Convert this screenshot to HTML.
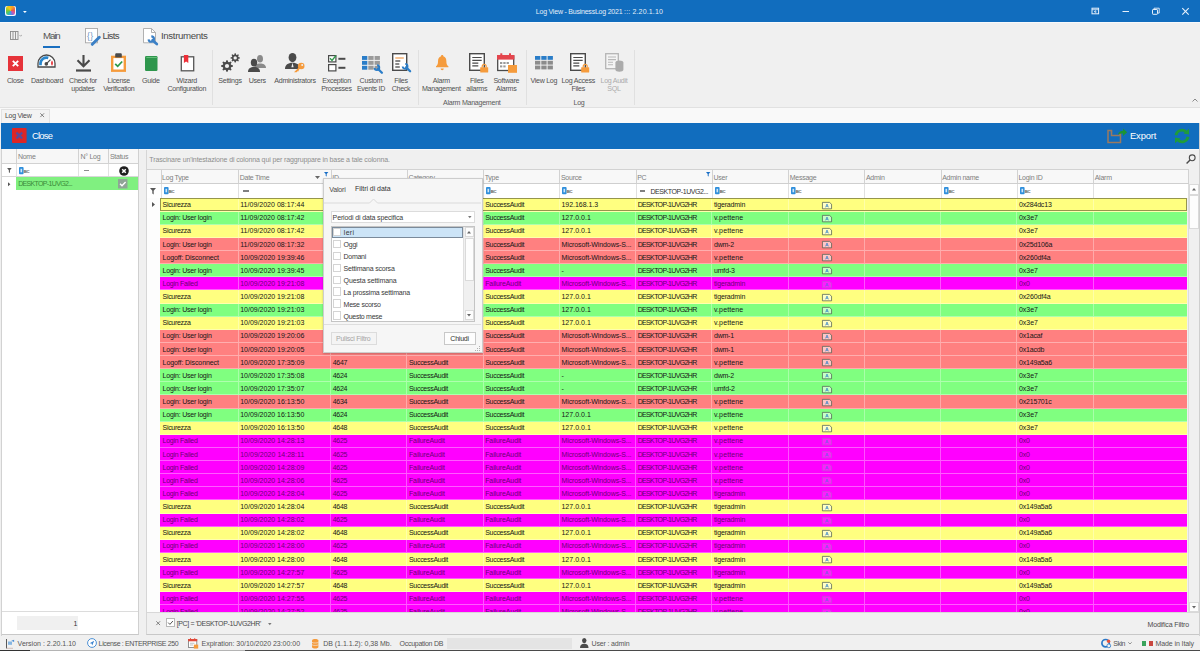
<!DOCTYPE html>
<html><head><meta charset="utf-8"><title>Log View - BusinessLog 2021</title>
<style>
*{box-sizing:border-box}
html,body{margin:0;padding:0}
body{width:1200px;height:651px;overflow:hidden;background:#f0f0f0;font-family:"Liberation Sans",sans-serif;font-size:7px;color:#3c3c3c;position:relative;line-height:1}
.a{position:absolute}
.t{position:absolute;white-space:nowrap;line-height:1}
svg{position:absolute;overflow:visible}
#title{left:0;top:0;width:1200px;height:21.8px;background:#116dbe}
#ribbon{left:0;top:21.8px;width:1200px;height:86.3px;background:#f0f0f0;border-bottom:1px solid #e1e1e1}
.rl{position:absolute;top:55.2px;text-align:center;white-space:nowrap;line-height:8.1px;font-size:7.1px;letter-spacing:-.28px;color:#505050;transform:translateX(-50%)}
.rl.d{color:#ababab}
.sep{position:absolute;top:28px;width:1px;height:55.5px;background:#e0e0e0}
.gc{position:absolute;top:77.9px;font-size:7.1px;letter-spacing:-.28px;color:#5a5a5a;transform:translateX(-50%);white-space:nowrap}
#tabstrip{left:0;top:108px;width:1200px;height:14.5px;background:#f9f9f9}
#bluebar{left:1px;top:122.5px;width:1198px;height:26.3px;background:#116dbe}
#left{left:1px;top:148.8px;width:138px;height:486.7px;background:#fff;border-right:1px solid #d0d0d0;border-bottom:1px solid #c8c8c8;overflow:hidden}
#grid{left:145.5px;top:148.8px;width:1053.5px;height:486.7px;background:#f0f0f0;border-left:1px solid #d6d6d6;border-bottom:1px solid #c8c8c8;overflow:hidden}
.hd{position:absolute;top:0;height:100%;border-left:1px solid #d2d2d2;color:#7e7e7e;font-size:7px;letter-spacing:-.25px;padding:3.600px 0 0 .6px;white-space:nowrap;overflow:hidden}
.row{position:absolute;left:13.600px;width:1027.400px;height:13.125px;overflow:hidden;border-bottom:1px solid rgba(255,255,255,.36);color:#161616}
.c.f{border-left-color:transparent}
.y{background:#ffff80}.g{background:#80ff80}.r{background:#ff8080}.m{background:#ff00ff}
.row.m{color:#6c0076}
.c{position:absolute;top:0;height:100%;border-left:1px solid rgba(255,255,255,.32);padding:2.700px 0 0 1.500px;white-space:nowrap;overflow:hidden;font-size:7px;letter-spacing:-.26px}
#status{left:0;top:636px;width:1200px;height:15px;background:#f0f0f0}
#pop{left:323px;top:177.9px;width:159.600px;height:175.200px;background:#f6f6f6;border:1px solid #cdcdcd;box-shadow:0 1px 2px rgba(0,0,0,.22)}
.li{position:absolute;left:0;width:131px;height:11.875px}
.li i{position:absolute;left:1.4px;top:1.5px;width:8.3px;height:8.3px;background:#fff;border:1px solid #d4d4d4}
.li b{position:absolute;left:12px;top:2.9px;font-weight:normal;font-size:7px;color:#3a3a3a;white-space:nowrap}
</style></head><body>

<div id="title" class="a">
<div class="a" style="left:5.200px;top:5.800px;width:10.800px;height:10.300px;border-radius:2px;background:#f4f8ff;overflow:hidden"><div class="a" style="left:.7px;top:.7px;width:9.400px;height:8.900px;border-radius:2.200px;background:conic-gradient(from -20deg at 52% 52%,#fcc21c,#f59a2a 14%,#ee5a48 28%,#d45aa8 40%,#8a6ad8 48%,#3aa2ea 58%,#3cc28a 68%,#7cc832 80%,#d4cc20 92%,#fcc21c)"></div></div>
<svg style="left:23.2px;top:10.6px" width="3.800" height="2.100" viewBox="0 0 5 3" preserveAspectRatio="none"><path d="M0 0h5L2.5 3z" fill="#fff"/></svg>
<div class="t" style="left:535.80px;top:7.50px;font-size:7px;letter-spacing:-0.219px;color:#e4eef8">Log View - BusinessLog 2021 </div>
<div class="t" style="left:624.10px;top:7.50px;font-size:7px;letter-spacing:0.148px;color:#e4eef8">::: 2.20.1.10</div>
<svg style="left:1090px;top:0" width="110" height="22" viewBox="0 0 110 22"><g fill="none" stroke="#e8f1fb" stroke-width="1"><rect x="2" y="8.2" width="6.6" height="5.6"/><path d="M2 9.7h6.6M5.3 10.8v2.4M4 12l1.3-1.2L6.6 12" stroke-width=".8"/><path d="M32.5 11.5h6.5"/><rect x="62.5" y="9.5" width="5" height="4.8" rx=".6"/><path d="M64 9.3V8.2h5.2v4.9h-1.3" stroke-width=".9"/><path d="M92.3 8.2l6.4 6.4M98.7 8.2l-6.4 6.4" stroke-width="1.1"/></g></svg>
</div>
<div class="a" style="left:0;top:21.800px;width:1200px;height:1.200px;background:#f7f9fc;z-index:3"></div>
<div id="ribbon" class="a">
<svg style="left:9.5px;top:9.5px" width="13" height="9" viewBox="0 0 13 9"><g fill="none" stroke="#8a8a8a" stroke-width=".9"><rect x=".5" y=".5" width="7.5" height="8"/><path d="M3 .5v8M5.5 .5v8"/></g><path d="M9.5 4l1.2 1.2L11.9 4" fill="none" stroke="#8a8a8a" stroke-width=".7"/></svg>
<div class="t" style="left:43.00px;top:9.40px;font-size:9.7px;letter-spacing:-1.106px;color:#555">Main</div>
<div class="a" style="left:43px;top:24.3px;width:17px;height:1.9px;background:#1a6fc0"></div>
<svg style="left:85px;top:6.2px" width="17" height="18" viewBox="0 0 17 18"><rect x=".5" y=".5" width="12" height="14.300" fill="#fff" stroke="#a8a8a8" stroke-width=".9"/><text x="2" y="10.600" font-size="8.500" font-family="Liberation Sans" fill="#6d94bd" letter-spacing=".3">{}</text><path d="M7.300 16.300l7-7" stroke="#3b80c6" stroke-width="3" stroke-linecap="round"/></svg>
<div class="t" style="left:102.50px;top:9.40px;font-size:9.7px;letter-spacing:-0.709px;color:#4a4a4a">Lists</div>
<svg style="left:143px;top:6.200px" width="17" height="19" viewBox="0 0 17 19"><path d="M.5.500h8l4 4v10.300H.5z" fill="#fff" stroke="#a8a8a8" stroke-width=".9"/><path d="M8.500.500v4h4" fill="none" stroke="#a8a8a8" stroke-width=".9"/><path d="M5.600 11.300A2.700 2.700 0 1 0 8.300 8.400" fill="none" stroke="#3b80c6" stroke-width="2.100"/><path d="M9.500 12.300l4.300 3.700" stroke="#3b80c6" stroke-width="2.700" stroke-linecap="round"/></svg>
<div class="t" style="left:161.00px;top:9.40px;font-size:9.7px;letter-spacing:-0.370px;color:#4a4a4a">Instruments</div>
<div class="a" style="left:15.3px;top:30.2px;width:0;height:0"><svg style="left:-7.5px;top:3.6px" width="15" height="15" viewBox="0 0 15 15"><rect width="15" height="15" fill="#e6333a"/><path d="M4.8 4.8l5.4 5.4M10.2 4.8l-5.4 5.4" stroke="#fff" stroke-width="1.9"/></svg></div>
<div class="rl" style="left:15.3px">Close</div>
<div class="a" style="left:46.4px;top:30.2px;width:0;height:0"><svg style="left:-9.5px;top:2.2px" width="19" height="14" viewBox="0 0 19 14"><path d="M1 13V9.500a8.500 8.500 0 0 1 17 0V13z" fill="#fff" stroke="#4a4a4a" stroke-width="1.300"/><path d="M3.500 11.200V9.600A6 6 0 0 1 11.300 3.900" fill="none" stroke="#2a86cc" stroke-width="2.700"/><path d="M15.300 11.400c1.100-1.700.7-3.600-.3-4.900-1 1.300-1.400 3.200-.3 4.900z" fill="#e8343a"/><circle cx="9.300" cy="9.900" r="1.800" fill="#4a4a4a"/><path d="M9.300 9.900l4.200-4.300" stroke="#4a4a4a" stroke-width="1.200"/></svg></div>
<div class="rl" style="left:47.0px">Dashboard</div>
<div class="a" style="left:83.0px;top:30.2px;width:0;height:0"><svg style="left:-7.5px;top:3px" width="15" height="17" viewBox="0 0 15 17"><path d="M7.5 0v10.5M1.5 5.2l6 6 6-6" fill="none" stroke="#4a4a4a" stroke-width="2.1"/><rect x="0" y="14.4" width="15" height="2.2" fill="#4a4a4a"/></svg></div>
<div class="rl" style="left:83.0px">Check for<br>updates</div>
<div class="a" style="left:118.8px;top:30.2px;width:0;height:0"><svg style="left:-7.5px;top:1px" width="15" height="19" viewBox="0 0 15 19"><rect x="1.2" y="3.9" width="12.6" height="13.8" fill="#fff" stroke="#f59b3c" stroke-width="2.4"/><path d="M4.2 4.600V1.500c0-.8.500-1.300 1.300-1.300h4c.8 0 1.300.5 1.300 1.300v3.100z" fill="#4a4a4a"/><path d="M4.200 10.800l2.500 2.500 4.500-4.800" fill="none" stroke="#2e9a4a" stroke-width="1.800"/></svg></div>
<div class="rl" style="left:118.8px">License<br>Verification</div>
<div class="a" style="left:150.8px;top:30.2px;width:0;height:0"><svg style="left:-6.25px;top:3.6px" width="12.5" height="15" viewBox="0 0 12.5 15"><rect width="12.5" height="15" rx="1.2" fill="#2e964c"/><rect x="1.4" y="1" width="10.5" height="1" fill="#7ad08e" opacity=".7"/></svg></div>
<div class="rl" style="left:150.8px">Guide</div>
<div class="a" style="left:186.8px;top:30.2px;width:0;height:0"><svg style="left:-7px;top:3px" width="14" height="16.5" viewBox="0 0 14 16.5"><rect x="1.300" y="1.800" width="12.400" height="14" fill="#fff" stroke="#555" stroke-width="1.300"/><path d="M3.900 0h4.400v8L6.100 6.400 3.900 8z" fill="#ee2f38"/></svg></div>
<div class="rl" style="left:186.8px">Wizard<br>Configuration</div>
<div class="a" style="left:230.0px;top:30.2px;width:0;height:0"><svg style="left:-9.5px;top:1px" width="19" height="19" viewBox="0 0 19 19"><path d="M11.86 12.35 L11.86 13.65 L10.08 14.19 L9.72 15.05 L10.60 16.69 L9.69 17.60 L8.05 16.72 L7.19 17.08 L6.65 18.86 L5.35 18.86 L4.81 17.08 L3.95 16.72 L2.31 17.60 L1.40 16.69 L2.28 15.05 L1.92 14.19 L0.14 13.65 L0.14 12.35 L1.92 11.81 L2.28 10.95 L1.40 9.31 L2.31 8.40 L3.95 9.28 L4.81 8.92 L5.35 7.14 L6.65 7.14 L7.19 8.92 L8.05 9.28 L9.69 8.40 L10.60 9.31 L9.72 10.95 L10.08 11.81Z" fill="#4a4a4a"/><circle cx="6" cy="13" r="2.124" fill="#f0f0f0"/><path d="M18.87 4.38 L18.87 5.42 L17.45 5.84 L17.17 6.53 L17.87 7.84 L17.14 8.57 L15.83 7.87 L15.14 8.15 L14.72 9.57 L13.68 9.57 L13.26 8.15 L12.57 7.87 L11.26 8.57 L10.53 7.84 L11.23 6.53 L10.95 5.84 L9.53 5.42 L9.53 4.38 L10.95 3.96 L11.23 3.27 L10.53 1.96 L11.26 1.23 L12.57 1.93 L13.26 1.65 L13.68 0.23 L14.72 0.23 L15.14 1.65 L15.83 1.93 L17.14 1.23 L17.87 1.96 L17.17 3.27 L17.45 3.96Z" fill="#4a4a4a"/><circle cx="14.2" cy="4.9" r="1.692" fill="#f0f0f0"/></svg></div>
<div class="rl" style="left:230.0px">Settings</div>
<div class="a" style="left:257.3px;top:30.2px;width:0;height:0"><svg style="left:-9px;top:3px" width="18" height="17" viewBox="0 0 18 17"><g fill="#8a8a8a"><ellipse cx="12" cy="3.8" rx="3" ry="3.8"/><path d="M6.5 13c0-3 2.2-4.4 5.5-4.4s6 1.400 6 4.400z"/></g><g fill="#4a4a4a"><ellipse cx="6" cy="7.6" rx="3.2" ry="3.9"/><path d="M0 17c0-3.600 2.300-5 6-5s6 1.400 6 5z"/></g></svg></div>
<div class="rl" style="left:257.3px">Users</div>
<div class="a" style="left:295.0px;top:30.2px;width:0;height:0"><svg style="left:-10px;top:1.2px" width="20" height="19" viewBox="0 0 20 19"><g fill="#4a4a4a"><ellipse cx="7.500" cy="4.600" rx="3.900" ry="4.600"/><path d="M0 16c0-4.200 3-6.300 7.500-6.300s7.500 2.100 7.500 6.300z"/></g><path d="M7.500 9.700l-1.100 4.500h2.200z" fill="#f0f0f0"/><g fill="#f59b3c"><circle cx="16.200" cy="13" r="3.300"/><path d="M14.200 14l-5.200 5.200h2.600l.9-1h1.200v-1.200l2.200-2.200z"/></g><circle cx="17.200" cy="12" r="1" fill="#f0f0f0"/></svg></div>
<div class="rl" style="left:295.0px">Administrators</div>
<div class="a" style="left:336.5px;top:30.2px;width:0;height:0"><svg style="left:-9px;top:2px" width="18" height="18" viewBox="0 0 18 18"><g fill="#fff" stroke="#4a4a4a" stroke-width="1.2"><rect x=".6" y="1.600" width="7.300" height="6.300"/><rect x=".6" y="10.600" width="7.300" height="6.300"/></g><path d="M2 4.300l2 2.200 4-5" fill="none" stroke="#2e9a4a" stroke-width="1.300"/><rect x="10.400" y="3.800" width="7" height="2" fill="#4a4a4a"/><rect x="10.400" y="12.800" width="7" height="2" fill="#4a4a4a"/></svg></div>
<div class="rl" style="left:336.5px">Exception<br>Processes</div>
<div class="a" style="left:371.5px;top:30.2px;width:0;height:0"><svg style="left:-10px;top:3.7px" width="20" height="17" viewBox="0 0 20 17"><rect x="0" y="0" width="5.3" height="3.9" fill="#2a7dc8"/><rect x="6.3" y="0" width="5.3" height="3.9" fill="#9a9a9a"/><rect x="12.6" y="0" width="5.3" height="3.9" fill="#9a9a9a"/><rect x="0" y="4.9" width="5.3" height="3.9" fill="#2a7dc8"/><rect x="6.3" y="4.9" width="5.3" height="3.9" fill="#9a9a9a"/><rect x="12.6" y="4.9" width="5.3" height="3.9" fill="#9a9a9a"/><rect x="0" y="9.8" width="5.3" height="3.9" fill="#2a7dc8"/><rect x="6.3" y="9.8" width="5.3" height="3.9" fill="#9a9a9a"/><rect x="12.6" y="9.8" width="5.3" height="3.9" fill="#9a9a9a"/><g transform="translate(11.6,8.4)"><path d="M.9 3.500A2.400 2.400 0 1 0 3.500.9" fill="none" stroke="#2a7dc8" stroke-width="1.900"/><path d="M4.300 4.300L8.300 8.300" stroke="#2a7dc8" stroke-width="2.300" stroke-linecap="round"/></g></svg></div>
<div class="rl" style="left:371.0px">Custom<br>Events ID</div>
<div class="a" style="left:402.0px;top:30.2px;width:0;height:0"><svg style="left:-10px;top:0.8px" width="20" height="19" viewBox="0 0 20 19"><rect x=".7" y=".7" width="14" height="16.600" fill="#fff" stroke="#4a4a4a" stroke-width="1.400"/><g stroke-width="1.300"><path d="M3.300 5h8.500" stroke="#f2a25e"/><path d="M3.300 8h5" stroke="#4a4a4a"/><path d="M3.300 11h4" stroke="#4a4a4a"/><path d="M3.300 14h4.500" stroke="#4a4a4a"/></g><g transform="translate(9.8,10)"><path d="M.9 3.500A2.400 2.400 0 1 0 3.500.9" fill="none" stroke="#2a7dc8" stroke-width="1.900"/><path d="M4.300 4.300L8.300 8.300" stroke="#2a7dc8" stroke-width="2.300" stroke-linecap="round"/></g></svg></div>
<div class="rl" style="left:401.0px">Files<br>Check</div>
<div class="a" style="left:442.1px;top:30.2px;width:0;height:0"><svg style="left:-6.2px;top:3px" width="12.4" height="15.4" viewBox="0 0 12.4 15.4"><g transform="scale(.886 .96)"><path d="M7 0c.8 0 1.300.5 1.300 1.200 2.200.6 3.400 2.500 3.400 5 0 3 .6 4.300 2.300 5.600v1H0v-1c1.700-1.300 2.300-2.600 2.300-5.600 0-2.500 1.200-4.400 3.400-5C5.700.5 6.200 0 7 0z" fill="#f59b3c"/><path d="M5.200 14.200h3.600a1.800 1.800 0 0 1-3.600 0z" fill="#f59b3c"/></g></svg></div>
<div class="rl" style="left:441.3px">Alarm<br>Management</div>
<div class="a" style="left:478.7px;top:30.2px;width:0;height:0"><svg style="left:-10px;top:0.8px" width="20" height="19" viewBox="0 0 20 19"><rect x=".7" y=".7" width="14.600" height="16.600" fill="#fff" stroke="#4a4a4a" stroke-width="1.400"/><g stroke="#4a4a4a" stroke-width="1.200"><path d="M3.300 4.500h9.400M3.300 7.300h9.400M3.300 10.100h6M3.300 12.900h6"/></g><g transform="translate(11.2,10.6)"><path d="M2 4V2.800a2 2 0 0 1 4 0V4" fill="none" stroke="#f59b3c" stroke-width="1.200"/><rect x="0" y="3.600" width="8" height="5.400" rx=".5" fill="#f59b3c"/></g></svg></div>
<div class="rl" style="left:476.8px">Files<br>allarms</div>
<div class="a" style="left:506.8px;top:30.2px;width:0;height:0"><svg style="left:-10px;top:0.8px" width="20" height="20" viewBox="0 0 20 20"><rect x=".7" y="3" width="16" height="14.500" fill="#fff" stroke="#4a4a4a" stroke-width="1.300"/><rect x="0" y="2" width="17.400" height="4.600" fill="#e4454d"/><rect x="3.300" y=".3" width="2" height="3.500" fill="#e4454d"/><rect x="12" y=".3" width="2" height="3.500" fill="#e4454d"/><g fill="#9a9a9a"><rect x="3" y="9" width="2.300" height="2"/><rect x="6.300" y="9" width="2.300" height="2"/><rect x="9.600" y="9" width="2.300" height="2"/><rect x="3" y="12.400" width="2.300" height="2"/><rect x="6.300" y="12.400" width="2.300" height="2"/></g><rect x="11" y="12" width="9" height="7.800" fill="#f59b3c"/></svg></div>
<div class="rl" style="left:506.3px">Software<br>Alarms</div>
<div class="a" style="left:543.8px;top:30.2px;width:0;height:0"><svg style="left:-9px;top:3.7px" width="18" height="15" viewBox="0 0 18 15"><rect x="0" y="0" width="5.3" height="3.8" fill="#2a7dc8"/><rect x="6.3" y="0" width="5.3" height="3.8" fill="#2a7dc8"/><rect x="12.6" y="0" width="5.3" height="3.8" fill="#2a7dc8"/><rect x="0" y="4.8" width="5.3" height="3.8" fill="#8c8c8c"/><rect x="6.3" y="4.8" width="5.3" height="3.8" fill="#8c8c8c"/><rect x="12.6" y="4.8" width="5.3" height="3.8" fill="#8c8c8c"/><rect x="0" y="9.6" width="5.3" height="3.8" fill="#8c8c8c"/><rect x="6.3" y="9.6" width="5.3" height="3.8" fill="#8c8c8c"/><rect x="12.6" y="9.6" width="5.3" height="3.8" fill="#8c8c8c"/></svg></div>
<div class="rl" style="left:543.8px">View Log</div>
<div class="a" style="left:580.1px;top:30.2px;width:0;height:0"><svg style="left:-10px;top:0.8px" width="20" height="19" viewBox="0 0 20 19"><rect x=".7" y=".7" width="14.600" height="16.600" fill="#fff" stroke="#4a4a4a" stroke-width="1.400"/><g stroke="#4a4a4a" stroke-width="1.200"><path d="M3.300 4.500h9.400M3.300 7.300h9.400M3.300 10.100h6M3.300 12.900h6"/></g><g transform="translate(11.2,10.6)"><path d="M2 4V2.800a2 2 0 0 1 4 0V4" fill="none" stroke="#f59b3c" stroke-width="1.200"/><rect x="0" y="3.600" width="8" height="5.400" rx=".5" fill="#f59b3c"/></g></svg></div>
<div class="rl" style="left:578.2px">Log Access<br>Files</div>
<div class="a" style="left:614.0px;top:30.2px;width:0;height:0"><svg style="left:-9.5px;top:0.8px" width="19" height="19" viewBox="0 0 19 19"><rect x=".7" y=".7" width="12.600" height="15" fill="#f4f4f4" stroke="#b4b4b4" stroke-width="1.300"/><g stroke="#b8b8b8" stroke-width="1.100"><path d="M3 4h8M3 6.600h8M3 9.200h5M3 11.800h5"/></g><path d="M10.400 9.500c0-1.300 1.800-2 4-2s4 .7 4 2v7.300c0 1.300-1.800 2-4 2s-4-.7-4-2z" fill="#ababab"/></svg></div>
<div class="rl d" style="left:614.0px">Log Audit<br>SQL</div>
<div class="sep" style="left:212.3px"></div>
<div class="sep" style="left:417.5px"></div>
<div class="sep" style="left:526.0px"></div>
<div class="sep" style="left:633.8px"></div>
<div class="gc" style="left:471.8px">Alarm Management</div>
<div class="gc" style="left:579px">Log</div>
<svg style="left:1191.5px;top:76px" width="6" height="4" viewBox="0 0 6 4"><path d="M.5 3.5L3 1l2.5 2.5" fill="none" stroke="#8a8a8a" stroke-width="1"/></svg>
</div>
<div id="tabstrip" class="a">
<div class="a" style="left:1px;top:1px;width:48.5px;height:14px;background:#f3f3f3;border:1px solid #e2e2e2;border-bottom:none"></div>
<div class="t" style="left:5.00px;top:4.40px;font-size:7px;letter-spacing:-0.271px;color:#4a4a4a">Log View</div>
<svg style="left:40.3px;top:5.4px" width="4.4" height="4.4" viewBox="0 0 4.4 4.4"><path d="M.3.3l3.8 3.8M4.1.3L.3 4.1" stroke="#666" stroke-width=".8"/></svg>
</div>
<div id="bluebar" class="a">
<svg style="left:10.7px;top:5.600px" width="14.600" height="15" viewBox="0 0 14.6 15"><rect width="14.600" height="15" rx=".8" fill="#dc2626"/><path d="M4.400 4.600l5.800 5.800M10.200 4.600l-5.800 5.800" stroke="#5a4a9a" stroke-width="2.200"/></svg>
<div class="t" style="left:31.00px;top:8.30px;font-size:9.4px;letter-spacing:-0.747px;color:#fff">Close</div>
<svg style="left:1105.500px;top:4.500px" width="21" height="17" viewBox="0 0 21 17"><path d="M1 3.500h3.500v5h8.500v-2h.5v9H1z" fill="none" stroke="#9a7a60" stroke-width="1.500"/><path d="M4.500 3.500v3" stroke="#9a7a60" stroke-width="1.300"/><path d="M11 7.500c.5-2.600 2.600-3.800 5-3.800V1.500l4.200 3.700L16 9V6.500c-2 0-3.600.3-5 1z" fill="#1c9434"/></svg>
<div class="t" style="left:1129.00px;top:8.30px;font-size:9.4px;letter-spacing:-0.145px;color:#fff">Export</div>
<svg style="left:1172.500px;top:5px" width="16" height="16" viewBox="0 0 16 16"><g fill="none" stroke="#1f9c3a" stroke-width="2.800"><path d="M2 7.200a6 6 0 0 1 9.800-3.600"/><path d="M14 8.800a6 6 0 0 1-9.800 3.600"/></g><path d="M9.500 5.500l5.500 1V.8z" fill="#1f9c3a"/><path d="M6.500 10.500l-5.500-1v5.700z" fill="#1f9c3a"/></svg>
</div>
<div id="left" class="a">
<div class="a" style="left:0;top:0;width:137px;height:15.1px;background:#f7f7f7;border-bottom:1px solid #d2d2d2">
<div class="hd" style="left:14.5px;width:62.5px;padding-top:4.3px;padding-left:1.4px">Nome</div>
<div class="hd" style="left:77.0px;width:29.5px;padding-top:4.3px;padding-left:1.4px">N° Log</div>
<div class="hd" style="left:106.5px;width:31.0px;padding-top:4.3px;padding-left:1.4px">Status</div>
</div>
<div class="a" style="left:0;top:15.1px;width:137px;height:13.3px;background:#fff;border-bottom:1px solid #d8d8d8">
<svg style="left:5.6px;top:4.2px" width="4.800" height="5" viewBox="0 0 6 6.5"><path d="M0 0h6L3.700 2.800v3.700L2.300 5.500V2.800z" fill="#5a5a5a"/></svg>
<div class="a" style="left:14.5px;top:0;width:1px;height:100%;background:#e2e2e2"></div>
<div class="a" style="left:77.0px;top:0;width:1px;height:100%;background:#e2e2e2"></div>
<div class="a" style="left:106.5px;top:0;width:1px;height:100%;background:#e2e2e2"></div>
<svg style="left:18px;top:3.3px" width="10" height="7.500" viewBox="0 0 10 7.500"><rect x="0" y="0" width="4.600" height="7.200" rx=".9" fill="#2f8fdc"/><rect x="1.500" y="1.800" width="1.600" height="3.500" fill="#cfe6f8"/><text x="4.700" y="5.500" font-size="4.300" font-family="Liberation Sans" font-weight="bold" fill="#606060" letter-spacing="-.3">BC</text></svg>
<div class="a" style="left:83px;top:6.2px;width:5px;height:1.4px;background:#8c8c8c"></div>
<svg style="left:118px;top:2px" width="10" height="10" viewBox="0 0 10 10"><circle cx="5" cy="5" r="4.800" fill="#1e1e1e"/><path d="M3.2 3.200l3.600 3.600M6.800 3.200L3.200 6.800" stroke="#fff" stroke-width="1.500"/></svg>
</div>
<svg style="left:6.5px;top:32.800px" width="2.400" height="4.400" viewBox="0 0 3 5"><path d="M0 0l3 2.500L0 5z" fill="#555"/></svg>
<div class="a" style="left:15px;top:28.4px;width:122.5px;height:13.100px;background:#80f080">
<div class="t" style="left:2.20px;top:3.20px;font-size:7px;letter-spacing:-0.665px;color:#3a8a3a">DESKTOP-1UVG2...</div>
<svg style="left:102.400px;top:1.900px" width="9.500" height="9.500" viewBox="0 0 9.500 9.500"><rect width="9.500" height="9.500" fill="#8fa596"/><path d="M2 4.800l2 2 3.600-3.800" fill="none" stroke="#fff" stroke-width="1.300"/></svg>
</div>
<div class="a" style="left:0;top:462.3px;width:137px;height:1px;background:#dcdcdc"></div>
<div class="a" style="left:16px;top:467.2px;width:61px;height:14.200px;background:#f0f0f0"></div>
<div class="t" style="left:72.40px;top:471.20px;font-size:7px;letter-spacing:0.000px;color:#333">1</div>
</div>
<div id="grid" class="a">
<div class="t" style="left:2.80px;top:7.50px;font-size:7px;letter-spacing:-0.124px;color:#8e8e8e">Trascinare un'intestazione di colonna qui per raggruppare in base a tale colonna.</div>
<svg style="left:1039.2px;top:5.3px" width="10.2" height="10.2" viewBox="0 0 10.5 10.5"><circle cx="6.400" cy="3.900" r="3" fill="none" stroke="#4a4a4a" stroke-width="1.100"/><path d="M4.200 6.200L.6 9.800" stroke="#4a4a4a" stroke-width="1.500"/></svg>
<div class="a" style="left:0;top:20.3px;width:1042px;height:15.4px;background:#f8f8f8;border-top:1px solid #d2d2d2;border-bottom:1px solid #cfcfcf">
<div class="hd" style="left:14.00px;width:77.60px">Log Type</div>
<div class="hd" style="left:91.60px;width:92.50px">Date Time</div>
<div class="hd" style="left:184.10px;width:76.25px">ID</div>
<div class="hd" style="left:260.35px;width:76.25px">Category</div>
<div class="hd" style="left:336.60px;width:76.25px">Type</div>
<div class="hd" style="left:412.85px;width:76.25px">Source</div>
<div class="hd" style="left:489.10px;width:76.25px">PC</div>
<div class="hd" style="left:565.35px;width:76.25px">User</div>
<div class="hd" style="left:641.60px;width:76.25px">Message</div>
<div class="hd" style="left:717.85px;width:76.25px">Admin</div>
<div class="hd" style="left:794.10px;width:76.25px">Admin name</div>
<div class="hd" style="left:870.35px;width:76.25px">Login ID</div>
<div class="hd" style="left:946.60px;width:94.40px">Alarm</div>
<div class="a" style="left:1041.00px;top:0;width:1px;height:100%;background:#d2d2d2"></div>
<svg style="left:168.3px;top:6.200px" width="5" height="3" viewBox="0 0 5 3"><path d="M0 0h5L2.500 3z" fill="#666"/></svg>
<svg style="left:177.6px;top:1.5px" width="4.400" height="4.600" viewBox="0 0 4.4 4.6"><path d="M0 0h4.400L2.700 2v2.600L1.700 4V2z" fill="#1a6fc6"/></svg>
<svg style="left:559px;top:1.5px" width="4.400" height="4.600" viewBox="0 0 4.4 4.6"><path d="M0 0h4.400L2.700 2v2.600L1.700 4V2z" fill="#1a6fc6"/></svg>
</div>
<div class="a" style="left:0;top:35.7px;width:1042px;height:13.6px;background:#fff">
<svg style="left:3.7px;top:4px" width="6" height="6.500" viewBox="0 0 6 6.5"><path d="M0 0h6L3.700 2.800v3.700L2.300 5.500V2.800z" fill="#5a5a5a"/></svg>
<div class="a" style="left:14.00px;top:0;width:1px;height:100%;background:#e0e0e0"></div>
<div class="a" style="left:91.60px;top:0;width:1px;height:100%;background:#e0e0e0"></div>
<div class="a" style="left:184.10px;top:0;width:1px;height:100%;background:#e0e0e0"></div>
<div class="a" style="left:260.35px;top:0;width:1px;height:100%;background:#e0e0e0"></div>
<div class="a" style="left:336.60px;top:0;width:1px;height:100%;background:#e0e0e0"></div>
<div class="a" style="left:412.85px;top:0;width:1px;height:100%;background:#e0e0e0"></div>
<div class="a" style="left:489.10px;top:0;width:1px;height:100%;background:#e0e0e0"></div>
<div class="a" style="left:565.35px;top:0;width:1px;height:100%;background:#e0e0e0"></div>
<div class="a" style="left:641.60px;top:0;width:1px;height:100%;background:#e0e0e0"></div>
<div class="a" style="left:717.85px;top:0;width:1px;height:100%;background:#e0e0e0"></div>
<div class="a" style="left:794.10px;top:0;width:1px;height:100%;background:#e0e0e0"></div>
<div class="a" style="left:870.35px;top:0;width:1px;height:100%;background:#e0e0e0"></div>
<div class="a" style="left:946.60px;top:0;width:1px;height:100%;background:#e0e0e0"></div>
<div class="a" style="left:1041.00px;top:0;width:1px;height:100%;background:#e0e0e0"></div>
<svg style="left:17.00px;top:3px" width="10" height="7.500" viewBox="0 0 10 7.500"><rect x="0" y="0" width="4.600" height="7.200" rx=".9" fill="#2f8fdc"/><rect x="1.500" y="1.800" width="1.600" height="3.500" fill="#cfe6f8"/><text x="4.700" y="5.500" font-size="4.300" font-family="Liberation Sans" font-weight="bold" fill="#606060" letter-spacing="-.3">BC</text></svg>
<svg style="left:339.60px;top:3px" width="10" height="7.500" viewBox="0 0 10 7.500"><rect x="0" y="0" width="4.600" height="7.200" rx=".9" fill="#2f8fdc"/><rect x="1.500" y="1.800" width="1.600" height="3.500" fill="#cfe6f8"/><text x="4.700" y="5.500" font-size="4.300" font-family="Liberation Sans" font-weight="bold" fill="#606060" letter-spacing="-.3">BC</text></svg>
<svg style="left:415.85px;top:3px" width="10" height="7.500" viewBox="0 0 10 7.500"><rect x="0" y="0" width="4.600" height="7.200" rx=".9" fill="#2f8fdc"/><rect x="1.500" y="1.800" width="1.600" height="3.500" fill="#cfe6f8"/><text x="4.700" y="5.500" font-size="4.300" font-family="Liberation Sans" font-weight="bold" fill="#606060" letter-spacing="-.3">BC</text></svg>
<svg style="left:568.35px;top:3px" width="10" height="7.500" viewBox="0 0 10 7.500"><rect x="0" y="0" width="4.600" height="7.200" rx=".9" fill="#2f8fdc"/><rect x="1.500" y="1.800" width="1.600" height="3.500" fill="#cfe6f8"/><text x="4.700" y="5.500" font-size="4.300" font-family="Liberation Sans" font-weight="bold" fill="#606060" letter-spacing="-.3">BC</text></svg>
<svg style="left:644.60px;top:3px" width="10" height="7.500" viewBox="0 0 10 7.500"><rect x="0" y="0" width="4.600" height="7.200" rx=".9" fill="#2f8fdc"/><rect x="1.500" y="1.800" width="1.600" height="3.500" fill="#cfe6f8"/><text x="4.700" y="5.500" font-size="4.300" font-family="Liberation Sans" font-weight="bold" fill="#606060" letter-spacing="-.3">BC</text></svg>
<svg style="left:797.10px;top:3px" width="10" height="7.500" viewBox="0 0 10 7.500"><rect x="0" y="0" width="4.600" height="7.200" rx=".9" fill="#2f8fdc"/><rect x="1.500" y="1.800" width="1.600" height="3.500" fill="#cfe6f8"/><text x="4.700" y="5.500" font-size="4.300" font-family="Liberation Sans" font-weight="bold" fill="#606060" letter-spacing="-.3">BC</text></svg>
<svg style="left:873.35px;top:3px" width="10" height="7.500" viewBox="0 0 10 7.500"><rect x="0" y="0" width="4.600" height="7.200" rx=".9" fill="#2f8fdc"/><rect x="1.500" y="1.800" width="1.600" height="3.500" fill="#cfe6f8"/><text x="4.700" y="5.500" font-size="4.300" font-family="Liberation Sans" font-weight="bold" fill="#606060" letter-spacing="-.3">BC</text></svg>
<div class="a" style="left:96.800px;top:5.6px;width:5.600px;height:1.700px;background:#808080"></div>
<div class="a" style="left:493.800px;top:5.6px;width:5.200px;height:1.700px;background:#808080"></div>
<div class="t" style="left:504.00px;top:3.10px;font-size:7px;letter-spacing:-0.434px;color:#333">DESKTOP-1UVG2...</div>
</div>
<div class="a" style="left:0;top:49.3px;width:14px;height:414px;background:#fdfdfd"></div>
<div class="row y" style="top:49.750px">
<div class="c f" style="left:0.00px;width:77.60px;letter-spacing:-0.315px">Sicurezza</div>
<div class="c" style="left:77.60px;width:92.50px;letter-spacing:0.021px">11/09/2020 08:17:44</div>
<div class="c" style="left:170.10px;width:76.25px;letter-spacing:-0.293px">4648</div>
<div class="c" style="left:246.35px;width:76.25px;letter-spacing:-0.284px">SuccessAudit</div>
<div class="c" style="left:322.60px;width:76.25px;letter-spacing:-0.284px">SuccessAudit</div>
<div class="c" style="left:398.85px;width:76.25px;letter-spacing:-0.025px">192.168.1.3</div>
<div class="c" style="left:475.10px;width:76.25px;letter-spacing:-0.655px">DESKTOP-1UVG2HR</div>
<div class="c" style="left:551.35px;width:76.25px;letter-spacing:-0.138px">tigeradmin</div>
<div class="c" style="left:627.60px;width:76.25px"><svg style="left:32.900px;top:3.300px" width="10" height="7.200" viewBox="0 0 9.4 7.8" preserveAspectRatio="none"><path d="M.4.400h6.600l2 2v5H.4z" fill="rgba(255,255,255,.55)" stroke="#4f5f4f" stroke-width=".75"/><path d="M3.400 5.800l1.300-3.600 1.300 3.600M3.900 4.700h1.600" fill="none" stroke="#2a7dc8" stroke-width=".7"/></svg></div>
<div class="c" style="left:703.85px;width:76.25px"></div>
<div class="c" style="left:780.10px;width:76.25px"></div>
<div class="c" style="left:856.35px;width:76.25px;letter-spacing:-0.172px">0x284dc13</div>
<div class="c" style="left:932.60px;width:94.40px"></div>
</div>
<div class="row g" style="top:62.875px">
<div class="c f" style="left:0.00px;width:77.60px;letter-spacing:-0.208px">Login: User login</div>
<div class="c" style="left:77.60px;width:92.50px;letter-spacing:0.021px">11/09/2020 08:17:42</div>
<div class="c" style="left:170.10px;width:76.25px;letter-spacing:-0.293px">4624</div>
<div class="c" style="left:246.35px;width:76.25px;letter-spacing:-0.284px">SuccessAudit</div>
<div class="c" style="left:322.60px;width:76.25px;letter-spacing:-0.284px">SuccessAudit</div>
<div class="c" style="left:398.85px;width:76.25px;letter-spacing:0.034px">127.0.0.1</div>
<div class="c" style="left:475.10px;width:76.25px;letter-spacing:-0.655px">DESKTOP-1UVG2HR</div>
<div class="c" style="left:551.35px;width:76.25px;letter-spacing:0.124px">v.pettene</div>
<div class="c" style="left:627.60px;width:76.25px"><svg style="left:32.900px;top:3.300px" width="10" height="7.200" viewBox="0 0 9.4 7.8" preserveAspectRatio="none"><path d="M.4.400h6.600l2 2v5H.4z" fill="rgba(255,255,255,.55)" stroke="#4f5f4f" stroke-width=".75"/><path d="M3.400 5.800l1.300-3.600 1.300 3.600M3.900 4.700h1.600" fill="none" stroke="#2a7dc8" stroke-width=".7"/></svg></div>
<div class="c" style="left:703.85px;width:76.25px"></div>
<div class="c" style="left:780.10px;width:76.25px"></div>
<div class="c" style="left:856.35px;width:76.25px;letter-spacing:-0.014px">0x3e7</div>
<div class="c" style="left:932.60px;width:94.40px"></div>
</div>
<div class="row y" style="top:76.000px">
<div class="c f" style="left:0.00px;width:77.60px;letter-spacing:-0.315px">Sicurezza</div>
<div class="c" style="left:77.60px;width:92.50px;letter-spacing:0.021px">11/09/2020 08:17:42</div>
<div class="c" style="left:170.10px;width:76.25px;letter-spacing:-0.293px">4648</div>
<div class="c" style="left:246.35px;width:76.25px;letter-spacing:-0.284px">SuccessAudit</div>
<div class="c" style="left:322.60px;width:76.25px;letter-spacing:-0.284px">SuccessAudit</div>
<div class="c" style="left:398.85px;width:76.25px;letter-spacing:0.034px">127.0.0.1</div>
<div class="c" style="left:475.10px;width:76.25px;letter-spacing:-0.655px">DESKTOP-1UVG2HR</div>
<div class="c" style="left:551.35px;width:76.25px;letter-spacing:0.124px">v.pettene</div>
<div class="c" style="left:627.60px;width:76.25px"><svg style="left:32.900px;top:3.300px" width="10" height="7.200" viewBox="0 0 9.4 7.8" preserveAspectRatio="none"><path d="M.4.400h6.600l2 2v5H.4z" fill="rgba(255,255,255,.55)" stroke="#4f5f4f" stroke-width=".75"/><path d="M3.400 5.800l1.300-3.600 1.300 3.600M3.900 4.700h1.600" fill="none" stroke="#2a7dc8" stroke-width=".7"/></svg></div>
<div class="c" style="left:703.85px;width:76.25px"></div>
<div class="c" style="left:780.10px;width:76.25px"></div>
<div class="c" style="left:856.35px;width:76.25px;letter-spacing:-0.014px">0x3e7</div>
<div class="c" style="left:932.60px;width:94.40px"></div>
</div>
<div class="row r" style="top:89.125px">
<div class="c f" style="left:0.00px;width:77.60px;letter-spacing:-0.208px">Login: User login</div>
<div class="c" style="left:77.60px;width:92.50px;letter-spacing:0.021px">11/09/2020 08:17:32</div>
<div class="c" style="left:170.10px;width:76.25px;letter-spacing:-0.293px">4634</div>
<div class="c" style="left:246.35px;width:76.25px;letter-spacing:-0.284px">SuccessAudit</div>
<div class="c" style="left:322.60px;width:76.25px;letter-spacing:-0.284px">SuccessAudit</div>
<div class="c" style="left:398.85px;width:76.25px;letter-spacing:-0.089px">Microsoft-Windows-S...</div>
<div class="c" style="left:475.10px;width:76.25px;letter-spacing:-0.655px">DESKTOP-1UVG2HR</div>
<div class="c" style="left:551.35px;width:76.25px;letter-spacing:-0.201px">dwm-2</div>
<div class="c" style="left:627.60px;width:76.25px"><svg style="left:32.900px;top:3.300px" width="10" height="7.200" viewBox="0 0 9.4 7.8" preserveAspectRatio="none"><path d="M.4.400h6.600l2 2v5H.4z" fill="rgba(255,255,255,.55)" stroke="#4f5f4f" stroke-width=".75"/><path d="M3.400 5.800l1.300-3.600 1.300 3.600M3.900 4.700h1.600" fill="none" stroke="#2a7dc8" stroke-width=".7"/></svg></div>
<div class="c" style="left:703.85px;width:76.25px"></div>
<div class="c" style="left:780.10px;width:76.25px"></div>
<div class="c" style="left:856.35px;width:76.25px;letter-spacing:-0.149px">0x25d106a</div>
<div class="c" style="left:932.60px;width:94.40px"></div>
</div>
<div class="row r" style="top:102.250px">
<div class="c f" style="left:0.00px;width:77.60px;letter-spacing:-0.092px">Logoff: Disconnect</div>
<div class="c" style="left:77.60px;width:92.50px;letter-spacing:-0.007px">10/09/2020 19:39:46</div>
<div class="c" style="left:170.10px;width:76.25px;letter-spacing:-0.293px">4647</div>
<div class="c" style="left:246.35px;width:76.25px;letter-spacing:-0.284px">SuccessAudit</div>
<div class="c" style="left:322.60px;width:76.25px;letter-spacing:-0.284px">SuccessAudit</div>
<div class="c" style="left:398.85px;width:76.25px;letter-spacing:-0.089px">Microsoft-Windows-S...</div>
<div class="c" style="left:475.10px;width:76.25px;letter-spacing:-0.655px">DESKTOP-1UVG2HR</div>
<div class="c" style="left:551.35px;width:76.25px;letter-spacing:0.124px">v.pettene</div>
<div class="c" style="left:627.60px;width:76.25px"><svg style="left:32.900px;top:3.300px" width="10" height="7.200" viewBox="0 0 9.4 7.8" preserveAspectRatio="none"><path d="M.4.400h6.600l2 2v5H.4z" fill="rgba(255,255,255,.55)" stroke="#4f5f4f" stroke-width=".75"/><path d="M3.400 5.800l1.300-3.600 1.300 3.600M3.900 4.700h1.600" fill="none" stroke="#2a7dc8" stroke-width=".7"/></svg></div>
<div class="c" style="left:703.85px;width:76.25px"></div>
<div class="c" style="left:780.10px;width:76.25px"></div>
<div class="c" style="left:856.35px;width:76.25px;letter-spacing:-0.111px">0x260df4a</div>
<div class="c" style="left:932.60px;width:94.40px"></div>
</div>
<div class="row g" style="top:115.375px">
<div class="c f" style="left:0.00px;width:77.60px;letter-spacing:-0.208px">Login: User login</div>
<div class="c" style="left:77.60px;width:92.50px;letter-spacing:-0.007px">10/09/2020 19:39:45</div>
<div class="c" style="left:170.10px;width:76.25px;letter-spacing:-0.293px">4624</div>
<div class="c" style="left:246.35px;width:76.25px;letter-spacing:-0.284px">SuccessAudit</div>
<div class="c" style="left:322.60px;width:76.25px;letter-spacing:-0.284px">SuccessAudit</div>
<div class="c" style="left:398.85px;width:76.25px;letter-spacing:-0.250px">-</div>
<div class="c" style="left:475.10px;width:76.25px;letter-spacing:-0.655px">DESKTOP-1UVG2HR</div>
<div class="c" style="left:551.35px;width:76.25px;letter-spacing:-0.148px">umfd-3</div>
<div class="c" style="left:627.60px;width:76.25px"><svg style="left:32.900px;top:3.300px" width="10" height="7.200" viewBox="0 0 9.4 7.8" preserveAspectRatio="none"><path d="M.4.400h6.600l2 2v5H.4z" fill="rgba(255,255,255,.55)" stroke="#4f5f4f" stroke-width=".75"/><path d="M3.400 5.800l1.300-3.600 1.300 3.600M3.900 4.700h1.600" fill="none" stroke="#2a7dc8" stroke-width=".7"/></svg></div>
<div class="c" style="left:703.85px;width:76.25px"></div>
<div class="c" style="left:780.10px;width:76.25px"></div>
<div class="c" style="left:856.35px;width:76.25px;letter-spacing:-0.014px">0x3e7</div>
<div class="c" style="left:932.60px;width:94.40px"></div>
</div>
<div class="row m" style="top:128.500px">
<div class="c f" style="left:0.00px;width:77.60px;letter-spacing:-0.261px">Login Failed</div>
<div class="c" style="left:77.60px;width:92.50px;letter-spacing:-0.007px">10/09/2020 19:21:08</div>
<div class="c" style="left:170.10px;width:76.25px;letter-spacing:-0.293px">4625</div>
<div class="c" style="left:246.35px;width:76.25px;letter-spacing:-0.113px">FailureAudit</div>
<div class="c" style="left:322.60px;width:76.25px;letter-spacing:-0.113px">FailureAudit</div>
<div class="c" style="left:398.85px;width:76.25px;letter-spacing:-0.089px">Microsoft-Windows-S...</div>
<div class="c" style="left:475.10px;width:76.25px;letter-spacing:-0.655px">DESKTOP-1UVG2HR</div>
<div class="c" style="left:551.35px;width:76.25px;letter-spacing:-0.138px">tigeradmin</div>
<div class="c" style="left:627.60px;width:76.25px"><svg style="left:32.900px;top:3.300px" width="10" height="7.200" viewBox="0 0 9.4 7.8" preserveAspectRatio="none"><path d="M.4.400h6.600l2 2v5H.4z" fill="rgba(255,120,255,.25)" stroke="#c44ad6" stroke-width=".75"/><path d="M3.400 5.800l1.300-3.600 1.300 3.600M3.900 4.700h1.600" fill="none" stroke="#7a5ce0" stroke-width=".75"/></svg></div>
<div class="c" style="left:703.85px;width:76.25px"></div>
<div class="c" style="left:780.10px;width:76.25px"></div>
<div class="c" style="left:856.35px;width:76.25px;letter-spacing:-0.195px">0x0</div>
<div class="c" style="left:932.60px;width:94.40px"></div>
</div>
<div class="row y" style="top:141.625px">
<div class="c f" style="left:0.00px;width:77.60px;letter-spacing:-0.315px">Sicurezza</div>
<div class="c" style="left:77.60px;width:92.50px;letter-spacing:-0.007px">10/09/2020 19:21:08</div>
<div class="c" style="left:170.10px;width:76.25px;letter-spacing:-0.293px">4648</div>
<div class="c" style="left:246.35px;width:76.25px;letter-spacing:-0.284px">SuccessAudit</div>
<div class="c" style="left:322.60px;width:76.25px;letter-spacing:-0.284px">SuccessAudit</div>
<div class="c" style="left:398.85px;width:76.25px;letter-spacing:0.034px">127.0.0.1</div>
<div class="c" style="left:475.10px;width:76.25px;letter-spacing:-0.655px">DESKTOP-1UVG2HR</div>
<div class="c" style="left:551.35px;width:76.25px;letter-spacing:-0.138px">tigeradmin</div>
<div class="c" style="left:627.60px;width:76.25px"><svg style="left:32.900px;top:3.300px" width="10" height="7.200" viewBox="0 0 9.4 7.8" preserveAspectRatio="none"><path d="M.4.400h6.600l2 2v5H.4z" fill="rgba(255,255,255,.55)" stroke="#4f5f4f" stroke-width=".75"/><path d="M3.400 5.800l1.300-3.600 1.300 3.600M3.900 4.700h1.600" fill="none" stroke="#2a7dc8" stroke-width=".7"/></svg></div>
<div class="c" style="left:703.85px;width:76.25px"></div>
<div class="c" style="left:780.10px;width:76.25px"></div>
<div class="c" style="left:856.35px;width:76.25px;letter-spacing:-0.111px">0x260df4a</div>
<div class="c" style="left:932.60px;width:94.40px"></div>
</div>
<div class="row g" style="top:154.750px">
<div class="c f" style="left:0.00px;width:77.60px;letter-spacing:-0.208px">Login: User login</div>
<div class="c" style="left:77.60px;width:92.50px;letter-spacing:-0.007px">10/09/2020 19:21:03</div>
<div class="c" style="left:170.10px;width:76.25px;letter-spacing:-0.293px">4624</div>
<div class="c" style="left:246.35px;width:76.25px;letter-spacing:-0.284px">SuccessAudit</div>
<div class="c" style="left:322.60px;width:76.25px;letter-spacing:-0.284px">SuccessAudit</div>
<div class="c" style="left:398.85px;width:76.25px;letter-spacing:0.034px">127.0.0.1</div>
<div class="c" style="left:475.10px;width:76.25px;letter-spacing:-0.655px">DESKTOP-1UVG2HR</div>
<div class="c" style="left:551.35px;width:76.25px;letter-spacing:0.124px">v.pettene</div>
<div class="c" style="left:627.60px;width:76.25px"><svg style="left:32.900px;top:3.300px" width="10" height="7.200" viewBox="0 0 9.4 7.8" preserveAspectRatio="none"><path d="M.4.400h6.600l2 2v5H.4z" fill="rgba(255,255,255,.55)" stroke="#4f5f4f" stroke-width=".75"/><path d="M3.400 5.800l1.300-3.600 1.300 3.600M3.900 4.700h1.600" fill="none" stroke="#2a7dc8" stroke-width=".7"/></svg></div>
<div class="c" style="left:703.85px;width:76.25px"></div>
<div class="c" style="left:780.10px;width:76.25px"></div>
<div class="c" style="left:856.35px;width:76.25px;letter-spacing:-0.014px">0x3e7</div>
<div class="c" style="left:932.60px;width:94.40px"></div>
</div>
<div class="row y" style="top:167.875px">
<div class="c f" style="left:0.00px;width:77.60px;letter-spacing:-0.315px">Sicurezza</div>
<div class="c" style="left:77.60px;width:92.50px;letter-spacing:-0.007px">10/09/2020 19:21:03</div>
<div class="c" style="left:170.10px;width:76.25px;letter-spacing:-0.293px">4648</div>
<div class="c" style="left:246.35px;width:76.25px;letter-spacing:-0.284px">SuccessAudit</div>
<div class="c" style="left:322.60px;width:76.25px;letter-spacing:-0.284px">SuccessAudit</div>
<div class="c" style="left:398.85px;width:76.25px;letter-spacing:0.034px">127.0.0.1</div>
<div class="c" style="left:475.10px;width:76.25px;letter-spacing:-0.655px">DESKTOP-1UVG2HR</div>
<div class="c" style="left:551.35px;width:76.25px;letter-spacing:0.124px">v.pettene</div>
<div class="c" style="left:627.60px;width:76.25px"><svg style="left:32.900px;top:3.300px" width="10" height="7.200" viewBox="0 0 9.4 7.8" preserveAspectRatio="none"><path d="M.4.400h6.600l2 2v5H.4z" fill="rgba(255,255,255,.55)" stroke="#4f5f4f" stroke-width=".75"/><path d="M3.400 5.800l1.300-3.600 1.300 3.600M3.900 4.700h1.600" fill="none" stroke="#2a7dc8" stroke-width=".7"/></svg></div>
<div class="c" style="left:703.85px;width:76.25px"></div>
<div class="c" style="left:780.10px;width:76.25px"></div>
<div class="c" style="left:856.35px;width:76.25px;letter-spacing:-0.014px">0x3e7</div>
<div class="c" style="left:932.60px;width:94.40px"></div>
</div>
<div class="row r" style="top:181.000px">
<div class="c f" style="left:0.00px;width:77.60px;letter-spacing:-0.208px">Login: User login</div>
<div class="c" style="left:77.60px;width:92.50px;letter-spacing:-0.007px">10/09/2020 19:20:06</div>
<div class="c" style="left:170.10px;width:76.25px;letter-spacing:-0.293px">4634</div>
<div class="c" style="left:246.35px;width:76.25px;letter-spacing:-0.284px">SuccessAudit</div>
<div class="c" style="left:322.60px;width:76.25px;letter-spacing:-0.284px">SuccessAudit</div>
<div class="c" style="left:398.85px;width:76.25px;letter-spacing:-0.089px">Microsoft-Windows-S...</div>
<div class="c" style="left:475.10px;width:76.25px;letter-spacing:-0.655px">DESKTOP-1UVG2HR</div>
<div class="c" style="left:551.35px;width:76.25px;letter-spacing:-0.201px">dwm-1</div>
<div class="c" style="left:627.60px;width:76.25px"><svg style="left:32.900px;top:3.300px" width="10" height="7.200" viewBox="0 0 9.4 7.8" preserveAspectRatio="none"><path d="M.4.400h6.600l2 2v5H.4z" fill="rgba(255,255,255,.55)" stroke="#4f5f4f" stroke-width=".75"/><path d="M3.400 5.800l1.300-3.600 1.300 3.600M3.900 4.700h1.600" fill="none" stroke="#2a7dc8" stroke-width=".7"/></svg></div>
<div class="c" style="left:703.85px;width:76.25px"></div>
<div class="c" style="left:780.10px;width:76.25px"></div>
<div class="c" style="left:856.35px;width:76.25px;letter-spacing:-0.159px">0x1acaf</div>
<div class="c" style="left:932.60px;width:94.40px"></div>
</div>
<div class="row r" style="top:194.125px">
<div class="c f" style="left:0.00px;width:77.60px;letter-spacing:-0.208px">Login: User login</div>
<div class="c" style="left:77.60px;width:92.50px;letter-spacing:-0.007px">10/09/2020 19:20:05</div>
<div class="c" style="left:170.10px;width:76.25px;letter-spacing:-0.293px">4634</div>
<div class="c" style="left:246.35px;width:76.25px;letter-spacing:-0.284px">SuccessAudit</div>
<div class="c" style="left:322.60px;width:76.25px;letter-spacing:-0.284px">SuccessAudit</div>
<div class="c" style="left:398.85px;width:76.25px;letter-spacing:-0.089px">Microsoft-Windows-S...</div>
<div class="c" style="left:475.10px;width:76.25px;letter-spacing:-0.655px">DESKTOP-1UVG2HR</div>
<div class="c" style="left:551.35px;width:76.25px;letter-spacing:-0.201px">dwm-1</div>
<div class="c" style="left:627.60px;width:76.25px"><svg style="left:32.900px;top:3.300px" width="10" height="7.200" viewBox="0 0 9.4 7.8" preserveAspectRatio="none"><path d="M.4.400h6.600l2 2v5H.4z" fill="rgba(255,255,255,.55)" stroke="#4f5f4f" stroke-width=".75"/><path d="M3.400 5.800l1.300-3.600 1.300 3.600M3.900 4.700h1.600" fill="none" stroke="#2a7dc8" stroke-width=".7"/></svg></div>
<div class="c" style="left:703.85px;width:76.25px"></div>
<div class="c" style="left:780.10px;width:76.25px"></div>
<div class="c" style="left:856.35px;width:76.25px;letter-spacing:-0.171px">0x1acdb</div>
<div class="c" style="left:932.60px;width:94.40px"></div>
</div>
<div class="row r" style="top:207.250px">
<div class="c f" style="left:0.00px;width:77.60px;letter-spacing:-0.092px">Logoff: Disconnect</div>
<div class="c" style="left:77.60px;width:92.50px;letter-spacing:-0.007px">10/09/2020 17:35:09</div>
<div class="c" style="left:170.10px;width:76.25px;letter-spacing:-0.293px">4647</div>
<div class="c" style="left:246.35px;width:76.25px;letter-spacing:-0.284px">SuccessAudit</div>
<div class="c" style="left:322.60px;width:76.25px;letter-spacing:-0.284px">SuccessAudit</div>
<div class="c" style="left:398.85px;width:76.25px;letter-spacing:-0.089px">Microsoft-Windows-S...</div>
<div class="c" style="left:475.10px;width:76.25px;letter-spacing:-0.655px">DESKTOP-1UVG2HR</div>
<div class="c" style="left:551.35px;width:76.25px;letter-spacing:0.124px">v.pettene</div>
<div class="c" style="left:627.60px;width:76.25px"><svg style="left:32.900px;top:3.300px" width="10" height="7.200" viewBox="0 0 9.4 7.8" preserveAspectRatio="none"><path d="M.4.400h6.600l2 2v5H.4z" fill="rgba(255,255,255,.55)" stroke="#4f5f4f" stroke-width=".75"/><path d="M3.400 5.800l1.300-3.600 1.300 3.600M3.900 4.700h1.600" fill="none" stroke="#2a7dc8" stroke-width=".7"/></svg></div>
<div class="c" style="left:703.85px;width:76.25px"></div>
<div class="c" style="left:780.10px;width:76.25px"></div>
<div class="c" style="left:856.35px;width:76.25px;letter-spacing:-0.174px">0x149a5a6</div>
<div class="c" style="left:932.60px;width:94.40px"></div>
</div>
<div class="row g" style="top:220.375px">
<div class="c f" style="left:0.00px;width:77.60px;letter-spacing:-0.208px">Login: User login</div>
<div class="c" style="left:77.60px;width:92.50px;letter-spacing:-0.007px">10/09/2020 17:35:08</div>
<div class="c" style="left:170.10px;width:76.25px;letter-spacing:-0.293px">4624</div>
<div class="c" style="left:246.35px;width:76.25px;letter-spacing:-0.284px">SuccessAudit</div>
<div class="c" style="left:322.60px;width:76.25px;letter-spacing:-0.284px">SuccessAudit</div>
<div class="c" style="left:398.85px;width:76.25px;letter-spacing:-0.250px">-</div>
<div class="c" style="left:475.10px;width:76.25px;letter-spacing:-0.655px">DESKTOP-1UVG2HR</div>
<div class="c" style="left:551.35px;width:76.25px;letter-spacing:-0.201px">dwm-2</div>
<div class="c" style="left:627.60px;width:76.25px"><svg style="left:32.900px;top:3.300px" width="10" height="7.200" viewBox="0 0 9.4 7.8" preserveAspectRatio="none"><path d="M.4.400h6.600l2 2v5H.4z" fill="rgba(255,255,255,.55)" stroke="#4f5f4f" stroke-width=".75"/><path d="M3.400 5.800l1.300-3.600 1.300 3.600M3.900 4.700h1.600" fill="none" stroke="#2a7dc8" stroke-width=".7"/></svg></div>
<div class="c" style="left:703.85px;width:76.25px"></div>
<div class="c" style="left:780.10px;width:76.25px"></div>
<div class="c" style="left:856.35px;width:76.25px;letter-spacing:-0.014px">0x3e7</div>
<div class="c" style="left:932.60px;width:94.40px"></div>
</div>
<div class="row g" style="top:233.500px">
<div class="c f" style="left:0.00px;width:77.60px;letter-spacing:-0.208px">Login: User login</div>
<div class="c" style="left:77.60px;width:92.50px;letter-spacing:-0.007px">10/09/2020 17:35:07</div>
<div class="c" style="left:170.10px;width:76.25px;letter-spacing:-0.293px">4624</div>
<div class="c" style="left:246.35px;width:76.25px;letter-spacing:-0.284px">SuccessAudit</div>
<div class="c" style="left:322.60px;width:76.25px;letter-spacing:-0.284px">SuccessAudit</div>
<div class="c" style="left:398.85px;width:76.25px;letter-spacing:-0.250px">-</div>
<div class="c" style="left:475.10px;width:76.25px;letter-spacing:-0.655px">DESKTOP-1UVG2HR</div>
<div class="c" style="left:551.35px;width:76.25px;letter-spacing:-0.148px">umfd-2</div>
<div class="c" style="left:627.60px;width:76.25px"><svg style="left:32.900px;top:3.300px" width="10" height="7.200" viewBox="0 0 9.4 7.8" preserveAspectRatio="none"><path d="M.4.400h6.600l2 2v5H.4z" fill="rgba(255,255,255,.55)" stroke="#4f5f4f" stroke-width=".75"/><path d="M3.400 5.800l1.300-3.600 1.300 3.600M3.900 4.700h1.600" fill="none" stroke="#2a7dc8" stroke-width=".7"/></svg></div>
<div class="c" style="left:703.85px;width:76.25px"></div>
<div class="c" style="left:780.10px;width:76.25px"></div>
<div class="c" style="left:856.35px;width:76.25px;letter-spacing:-0.014px">0x3e7</div>
<div class="c" style="left:932.60px;width:94.40px"></div>
</div>
<div class="row r" style="top:246.625px">
<div class="c f" style="left:0.00px;width:77.60px;letter-spacing:-0.208px">Login: User login</div>
<div class="c" style="left:77.60px;width:92.50px;letter-spacing:-0.007px">10/09/2020 16:13:50</div>
<div class="c" style="left:170.10px;width:76.25px;letter-spacing:-0.293px">4634</div>
<div class="c" style="left:246.35px;width:76.25px;letter-spacing:-0.284px">SuccessAudit</div>
<div class="c" style="left:322.60px;width:76.25px;letter-spacing:-0.284px">SuccessAudit</div>
<div class="c" style="left:398.85px;width:76.25px;letter-spacing:-0.089px">Microsoft-Windows-S...</div>
<div class="c" style="left:475.10px;width:76.25px;letter-spacing:-0.655px">DESKTOP-1UVG2HR</div>
<div class="c" style="left:551.35px;width:76.25px;letter-spacing:0.124px">v.pettene</div>
<div class="c" style="left:627.60px;width:76.25px"><svg style="left:32.900px;top:3.300px" width="10" height="7.200" viewBox="0 0 9.4 7.8" preserveAspectRatio="none"><path d="M.4.400h6.600l2 2v5H.4z" fill="rgba(255,255,255,.55)" stroke="#4f5f4f" stroke-width=".75"/><path d="M3.400 5.800l1.300-3.600 1.300 3.600M3.900 4.700h1.600" fill="none" stroke="#2a7dc8" stroke-width=".7"/></svg></div>
<div class="c" style="left:703.85px;width:76.25px"></div>
<div class="c" style="left:780.10px;width:76.25px"></div>
<div class="c" style="left:856.35px;width:76.25px;letter-spacing:-0.172px">0x215701c</div>
<div class="c" style="left:932.60px;width:94.40px"></div>
</div>
<div class="row g" style="top:259.750px">
<div class="c f" style="left:0.00px;width:77.60px;letter-spacing:-0.208px">Login: User login</div>
<div class="c" style="left:77.60px;width:92.50px;letter-spacing:-0.007px">10/09/2020 16:13:50</div>
<div class="c" style="left:170.10px;width:76.25px;letter-spacing:-0.293px">4624</div>
<div class="c" style="left:246.35px;width:76.25px;letter-spacing:-0.284px">SuccessAudit</div>
<div class="c" style="left:322.60px;width:76.25px;letter-spacing:-0.284px">SuccessAudit</div>
<div class="c" style="left:398.85px;width:76.25px;letter-spacing:0.034px">127.0.0.1</div>
<div class="c" style="left:475.10px;width:76.25px;letter-spacing:-0.655px">DESKTOP-1UVG2HR</div>
<div class="c" style="left:551.35px;width:76.25px;letter-spacing:0.124px">v.pettene</div>
<div class="c" style="left:627.60px;width:76.25px"><svg style="left:32.900px;top:3.300px" width="10" height="7.200" viewBox="0 0 9.4 7.8" preserveAspectRatio="none"><path d="M.4.400h6.600l2 2v5H.4z" fill="rgba(255,255,255,.55)" stroke="#4f5f4f" stroke-width=".75"/><path d="M3.400 5.800l1.300-3.600 1.300 3.600M3.900 4.700h1.600" fill="none" stroke="#2a7dc8" stroke-width=".7"/></svg></div>
<div class="c" style="left:703.85px;width:76.25px"></div>
<div class="c" style="left:780.10px;width:76.25px"></div>
<div class="c" style="left:856.35px;width:76.25px;letter-spacing:-0.014px">0x3e7</div>
<div class="c" style="left:932.60px;width:94.40px"></div>
</div>
<div class="row y" style="top:272.875px">
<div class="c f" style="left:0.00px;width:77.60px;letter-spacing:-0.315px">Sicurezza</div>
<div class="c" style="left:77.60px;width:92.50px;letter-spacing:-0.007px">10/09/2020 16:13:50</div>
<div class="c" style="left:170.10px;width:76.25px;letter-spacing:-0.293px">4648</div>
<div class="c" style="left:246.35px;width:76.25px;letter-spacing:-0.284px">SuccessAudit</div>
<div class="c" style="left:322.60px;width:76.25px;letter-spacing:-0.284px">SuccessAudit</div>
<div class="c" style="left:398.85px;width:76.25px;letter-spacing:0.034px">127.0.0.1</div>
<div class="c" style="left:475.10px;width:76.25px;letter-spacing:-0.655px">DESKTOP-1UVG2HR</div>
<div class="c" style="left:551.35px;width:76.25px;letter-spacing:0.124px">v.pettene</div>
<div class="c" style="left:627.60px;width:76.25px"><svg style="left:32.900px;top:3.300px" width="10" height="7.200" viewBox="0 0 9.4 7.8" preserveAspectRatio="none"><path d="M.4.400h6.600l2 2v5H.4z" fill="rgba(255,255,255,.55)" stroke="#4f5f4f" stroke-width=".75"/><path d="M3.400 5.800l1.300-3.600 1.300 3.600M3.900 4.700h1.600" fill="none" stroke="#2a7dc8" stroke-width=".7"/></svg></div>
<div class="c" style="left:703.85px;width:76.25px"></div>
<div class="c" style="left:780.10px;width:76.25px"></div>
<div class="c" style="left:856.35px;width:76.25px;letter-spacing:-0.014px">0x3e7</div>
<div class="c" style="left:932.60px;width:94.40px"></div>
</div>
<div class="row m" style="top:286.000px">
<div class="c f" style="left:0.00px;width:77.60px;letter-spacing:-0.261px">Login Failed</div>
<div class="c" style="left:77.60px;width:92.50px;letter-spacing:-0.007px">10/09/2020 14:28:13</div>
<div class="c" style="left:170.10px;width:76.25px;letter-spacing:-0.293px">4625</div>
<div class="c" style="left:246.35px;width:76.25px;letter-spacing:-0.113px">FailureAudit</div>
<div class="c" style="left:322.60px;width:76.25px;letter-spacing:-0.113px">FailureAudit</div>
<div class="c" style="left:398.85px;width:76.25px;letter-spacing:-0.089px">Microsoft-Windows-S...</div>
<div class="c" style="left:475.10px;width:76.25px;letter-spacing:-0.655px">DESKTOP-1UVG2HR</div>
<div class="c" style="left:551.35px;width:76.25px;letter-spacing:0.124px">v.pettene</div>
<div class="c" style="left:627.60px;width:76.25px"><svg style="left:32.900px;top:3.300px" width="10" height="7.200" viewBox="0 0 9.4 7.8" preserveAspectRatio="none"><path d="M.4.400h6.600l2 2v5H.4z" fill="rgba(255,120,255,.25)" stroke="#c44ad6" stroke-width=".75"/><path d="M3.400 5.800l1.300-3.600 1.300 3.600M3.900 4.700h1.600" fill="none" stroke="#7a5ce0" stroke-width=".75"/></svg></div>
<div class="c" style="left:703.85px;width:76.25px"></div>
<div class="c" style="left:780.10px;width:76.25px"></div>
<div class="c" style="left:856.35px;width:76.25px;letter-spacing:-0.195px">0x0</div>
<div class="c" style="left:932.60px;width:94.40px"></div>
</div>
<div class="row m" style="top:299.125px">
<div class="c f" style="left:0.00px;width:77.60px;letter-spacing:-0.261px">Login Failed</div>
<div class="c" style="left:77.60px;width:92.50px;letter-spacing:0.021px">10/09/2020 14:28:11</div>
<div class="c" style="left:170.10px;width:76.25px;letter-spacing:-0.293px">4625</div>
<div class="c" style="left:246.35px;width:76.25px;letter-spacing:-0.113px">FailureAudit</div>
<div class="c" style="left:322.60px;width:76.25px;letter-spacing:-0.113px">FailureAudit</div>
<div class="c" style="left:398.85px;width:76.25px;letter-spacing:-0.089px">Microsoft-Windows-S...</div>
<div class="c" style="left:475.10px;width:76.25px;letter-spacing:-0.655px">DESKTOP-1UVG2HR</div>
<div class="c" style="left:551.35px;width:76.25px;letter-spacing:0.124px">v.pettene</div>
<div class="c" style="left:627.60px;width:76.25px"><svg style="left:32.900px;top:3.300px" width="10" height="7.200" viewBox="0 0 9.4 7.8" preserveAspectRatio="none"><path d="M.4.400h6.600l2 2v5H.4z" fill="rgba(255,120,255,.25)" stroke="#c44ad6" stroke-width=".75"/><path d="M3.400 5.800l1.300-3.600 1.300 3.600M3.900 4.700h1.600" fill="none" stroke="#7a5ce0" stroke-width=".75"/></svg></div>
<div class="c" style="left:703.85px;width:76.25px"></div>
<div class="c" style="left:780.10px;width:76.25px"></div>
<div class="c" style="left:856.35px;width:76.25px;letter-spacing:-0.195px">0x0</div>
<div class="c" style="left:932.60px;width:94.40px"></div>
</div>
<div class="row m" style="top:312.250px">
<div class="c f" style="left:0.00px;width:77.60px;letter-spacing:-0.261px">Login Failed</div>
<div class="c" style="left:77.60px;width:92.50px;letter-spacing:-0.007px">10/09/2020 14:28:09</div>
<div class="c" style="left:170.10px;width:76.25px;letter-spacing:-0.293px">4625</div>
<div class="c" style="left:246.35px;width:76.25px;letter-spacing:-0.113px">FailureAudit</div>
<div class="c" style="left:322.60px;width:76.25px;letter-spacing:-0.113px">FailureAudit</div>
<div class="c" style="left:398.85px;width:76.25px;letter-spacing:-0.089px">Microsoft-Windows-S...</div>
<div class="c" style="left:475.10px;width:76.25px;letter-spacing:-0.655px">DESKTOP-1UVG2HR</div>
<div class="c" style="left:551.35px;width:76.25px;letter-spacing:0.124px">v.pettene</div>
<div class="c" style="left:627.60px;width:76.25px"><svg style="left:32.900px;top:3.300px" width="10" height="7.200" viewBox="0 0 9.4 7.8" preserveAspectRatio="none"><path d="M.4.400h6.600l2 2v5H.4z" fill="rgba(255,120,255,.25)" stroke="#c44ad6" stroke-width=".75"/><path d="M3.400 5.800l1.300-3.600 1.300 3.600M3.900 4.700h1.600" fill="none" stroke="#7a5ce0" stroke-width=".75"/></svg></div>
<div class="c" style="left:703.85px;width:76.25px"></div>
<div class="c" style="left:780.10px;width:76.25px"></div>
<div class="c" style="left:856.35px;width:76.25px;letter-spacing:-0.195px">0x0</div>
<div class="c" style="left:932.60px;width:94.40px"></div>
</div>
<div class="row m" style="top:325.375px">
<div class="c f" style="left:0.00px;width:77.60px;letter-spacing:-0.261px">Login Failed</div>
<div class="c" style="left:77.60px;width:92.50px;letter-spacing:-0.007px">10/09/2020 14:28:06</div>
<div class="c" style="left:170.10px;width:76.25px;letter-spacing:-0.293px">4625</div>
<div class="c" style="left:246.35px;width:76.25px;letter-spacing:-0.113px">FailureAudit</div>
<div class="c" style="left:322.60px;width:76.25px;letter-spacing:-0.113px">FailureAudit</div>
<div class="c" style="left:398.85px;width:76.25px;letter-spacing:-0.089px">Microsoft-Windows-S...</div>
<div class="c" style="left:475.10px;width:76.25px;letter-spacing:-0.655px">DESKTOP-1UVG2HR</div>
<div class="c" style="left:551.35px;width:76.25px;letter-spacing:0.124px">v.pettene</div>
<div class="c" style="left:627.60px;width:76.25px"><svg style="left:32.900px;top:3.300px" width="10" height="7.200" viewBox="0 0 9.4 7.8" preserveAspectRatio="none"><path d="M.4.400h6.600l2 2v5H.4z" fill="rgba(255,120,255,.25)" stroke="#c44ad6" stroke-width=".75"/><path d="M3.400 5.800l1.300-3.600 1.300 3.600M3.900 4.700h1.600" fill="none" stroke="#7a5ce0" stroke-width=".75"/></svg></div>
<div class="c" style="left:703.85px;width:76.25px"></div>
<div class="c" style="left:780.10px;width:76.25px"></div>
<div class="c" style="left:856.35px;width:76.25px;letter-spacing:-0.195px">0x0</div>
<div class="c" style="left:932.60px;width:94.40px"></div>
</div>
<div class="row m" style="top:338.500px">
<div class="c f" style="left:0.00px;width:77.60px;letter-spacing:-0.261px">Login Failed</div>
<div class="c" style="left:77.60px;width:92.50px;letter-spacing:-0.007px">10/09/2020 14:28:04</div>
<div class="c" style="left:170.10px;width:76.25px;letter-spacing:-0.293px">4625</div>
<div class="c" style="left:246.35px;width:76.25px;letter-spacing:-0.113px">FailureAudit</div>
<div class="c" style="left:322.60px;width:76.25px;letter-spacing:-0.113px">FailureAudit</div>
<div class="c" style="left:398.85px;width:76.25px;letter-spacing:-0.089px">Microsoft-Windows-S...</div>
<div class="c" style="left:475.10px;width:76.25px;letter-spacing:-0.655px">DESKTOP-1UVG2HR</div>
<div class="c" style="left:551.35px;width:76.25px;letter-spacing:-0.138px">tigeradmin</div>
<div class="c" style="left:627.60px;width:76.25px"><svg style="left:32.900px;top:3.300px" width="10" height="7.200" viewBox="0 0 9.4 7.8" preserveAspectRatio="none"><path d="M.4.400h6.600l2 2v5H.4z" fill="rgba(255,120,255,.25)" stroke="#c44ad6" stroke-width=".75"/><path d="M3.400 5.800l1.300-3.600 1.300 3.600M3.900 4.700h1.600" fill="none" stroke="#7a5ce0" stroke-width=".75"/></svg></div>
<div class="c" style="left:703.85px;width:76.25px"></div>
<div class="c" style="left:780.10px;width:76.25px"></div>
<div class="c" style="left:856.35px;width:76.25px;letter-spacing:-0.195px">0x0</div>
<div class="c" style="left:932.60px;width:94.40px"></div>
</div>
<div class="row y" style="top:351.625px">
<div class="c f" style="left:0.00px;width:77.60px;letter-spacing:-0.315px">Sicurezza</div>
<div class="c" style="left:77.60px;width:92.50px;letter-spacing:-0.007px">10/09/2020 14:28:04</div>
<div class="c" style="left:170.10px;width:76.25px;letter-spacing:-0.293px">4648</div>
<div class="c" style="left:246.35px;width:76.25px;letter-spacing:-0.284px">SuccessAudit</div>
<div class="c" style="left:322.60px;width:76.25px;letter-spacing:-0.284px">SuccessAudit</div>
<div class="c" style="left:398.85px;width:76.25px;letter-spacing:0.034px">127.0.0.1</div>
<div class="c" style="left:475.10px;width:76.25px;letter-spacing:-0.655px">DESKTOP-1UVG2HR</div>
<div class="c" style="left:551.35px;width:76.25px;letter-spacing:-0.138px">tigeradmin</div>
<div class="c" style="left:627.60px;width:76.25px"><svg style="left:32.900px;top:3.300px" width="10" height="7.200" viewBox="0 0 9.4 7.8" preserveAspectRatio="none"><path d="M.4.400h6.600l2 2v5H.4z" fill="rgba(255,255,255,.55)" stroke="#4f5f4f" stroke-width=".75"/><path d="M3.400 5.800l1.300-3.600 1.300 3.600M3.900 4.700h1.600" fill="none" stroke="#2a7dc8" stroke-width=".7"/></svg></div>
<div class="c" style="left:703.85px;width:76.25px"></div>
<div class="c" style="left:780.10px;width:76.25px"></div>
<div class="c" style="left:856.35px;width:76.25px;letter-spacing:-0.174px">0x149a5a6</div>
<div class="c" style="left:932.60px;width:94.40px"></div>
</div>
<div class="row m" style="top:364.750px">
<div class="c f" style="left:0.00px;width:77.60px;letter-spacing:-0.261px">Login Failed</div>
<div class="c" style="left:77.60px;width:92.50px;letter-spacing:-0.007px">10/09/2020 14:28:02</div>
<div class="c" style="left:170.10px;width:76.25px;letter-spacing:-0.293px">4625</div>
<div class="c" style="left:246.35px;width:76.25px;letter-spacing:-0.113px">FailureAudit</div>
<div class="c" style="left:322.60px;width:76.25px;letter-spacing:-0.113px">FailureAudit</div>
<div class="c" style="left:398.85px;width:76.25px;letter-spacing:-0.089px">Microsoft-Windows-S...</div>
<div class="c" style="left:475.10px;width:76.25px;letter-spacing:-0.655px">DESKTOP-1UVG2HR</div>
<div class="c" style="left:551.35px;width:76.25px;letter-spacing:-0.138px">tigeradmin</div>
<div class="c" style="left:627.60px;width:76.25px"><svg style="left:32.900px;top:3.300px" width="10" height="7.200" viewBox="0 0 9.4 7.8" preserveAspectRatio="none"><path d="M.4.400h6.600l2 2v5H.4z" fill="rgba(255,120,255,.25)" stroke="#c44ad6" stroke-width=".75"/><path d="M3.400 5.800l1.300-3.600 1.300 3.600M3.900 4.700h1.600" fill="none" stroke="#7a5ce0" stroke-width=".75"/></svg></div>
<div class="c" style="left:703.85px;width:76.25px"></div>
<div class="c" style="left:780.10px;width:76.25px"></div>
<div class="c" style="left:856.35px;width:76.25px;letter-spacing:-0.195px">0x0</div>
<div class="c" style="left:932.60px;width:94.40px"></div>
</div>
<div class="row y" style="top:377.875px">
<div class="c f" style="left:0.00px;width:77.60px;letter-spacing:-0.315px">Sicurezza</div>
<div class="c" style="left:77.60px;width:92.50px;letter-spacing:-0.007px">10/09/2020 14:28:02</div>
<div class="c" style="left:170.10px;width:76.25px;letter-spacing:-0.293px">4648</div>
<div class="c" style="left:246.35px;width:76.25px;letter-spacing:-0.284px">SuccessAudit</div>
<div class="c" style="left:322.60px;width:76.25px;letter-spacing:-0.284px">SuccessAudit</div>
<div class="c" style="left:398.85px;width:76.25px;letter-spacing:0.034px">127.0.0.1</div>
<div class="c" style="left:475.10px;width:76.25px;letter-spacing:-0.655px">DESKTOP-1UVG2HR</div>
<div class="c" style="left:551.35px;width:76.25px;letter-spacing:-0.138px">tigeradmin</div>
<div class="c" style="left:627.60px;width:76.25px"><svg style="left:32.900px;top:3.300px" width="10" height="7.200" viewBox="0 0 9.4 7.8" preserveAspectRatio="none"><path d="M.4.400h6.600l2 2v5H.4z" fill="rgba(255,255,255,.55)" stroke="#4f5f4f" stroke-width=".75"/><path d="M3.400 5.800l1.300-3.600 1.300 3.600M3.900 4.700h1.600" fill="none" stroke="#2a7dc8" stroke-width=".7"/></svg></div>
<div class="c" style="left:703.85px;width:76.25px"></div>
<div class="c" style="left:780.10px;width:76.25px"></div>
<div class="c" style="left:856.35px;width:76.25px;letter-spacing:-0.174px">0x149a5a6</div>
<div class="c" style="left:932.60px;width:94.40px"></div>
</div>
<div class="row m" style="top:391.000px">
<div class="c f" style="left:0.00px;width:77.60px;letter-spacing:-0.261px">Login Failed</div>
<div class="c" style="left:77.60px;width:92.50px;letter-spacing:-0.007px">10/09/2020 14:28:00</div>
<div class="c" style="left:170.10px;width:76.25px;letter-spacing:-0.293px">4625</div>
<div class="c" style="left:246.35px;width:76.25px;letter-spacing:-0.113px">FailureAudit</div>
<div class="c" style="left:322.60px;width:76.25px;letter-spacing:-0.113px">FailureAudit</div>
<div class="c" style="left:398.85px;width:76.25px;letter-spacing:-0.089px">Microsoft-Windows-S...</div>
<div class="c" style="left:475.10px;width:76.25px;letter-spacing:-0.655px">DESKTOP-1UVG2HR</div>
<div class="c" style="left:551.35px;width:76.25px;letter-spacing:-0.138px">tigeradmin</div>
<div class="c" style="left:627.60px;width:76.25px"><svg style="left:32.900px;top:3.300px" width="10" height="7.200" viewBox="0 0 9.4 7.8" preserveAspectRatio="none"><path d="M.4.400h6.600l2 2v5H.4z" fill="rgba(255,120,255,.25)" stroke="#c44ad6" stroke-width=".75"/><path d="M3.400 5.800l1.300-3.600 1.300 3.600M3.900 4.700h1.600" fill="none" stroke="#7a5ce0" stroke-width=".75"/></svg></div>
<div class="c" style="left:703.85px;width:76.25px"></div>
<div class="c" style="left:780.10px;width:76.25px"></div>
<div class="c" style="left:856.35px;width:76.25px;letter-spacing:-0.195px">0x0</div>
<div class="c" style="left:932.60px;width:94.40px"></div>
</div>
<div class="row y" style="top:404.125px">
<div class="c f" style="left:0.00px;width:77.60px;letter-spacing:-0.315px">Sicurezza</div>
<div class="c" style="left:77.60px;width:92.50px;letter-spacing:-0.007px">10/09/2020 14:28:00</div>
<div class="c" style="left:170.10px;width:76.25px;letter-spacing:-0.293px">4648</div>
<div class="c" style="left:246.35px;width:76.25px;letter-spacing:-0.284px">SuccessAudit</div>
<div class="c" style="left:322.60px;width:76.25px;letter-spacing:-0.284px">SuccessAudit</div>
<div class="c" style="left:398.85px;width:76.25px;letter-spacing:0.034px">127.0.0.1</div>
<div class="c" style="left:475.10px;width:76.25px;letter-spacing:-0.655px">DESKTOP-1UVG2HR</div>
<div class="c" style="left:551.35px;width:76.25px;letter-spacing:-0.138px">tigeradmin</div>
<div class="c" style="left:627.60px;width:76.25px"><svg style="left:32.900px;top:3.300px" width="10" height="7.200" viewBox="0 0 9.4 7.8" preserveAspectRatio="none"><path d="M.4.400h6.600l2 2v5H.4z" fill="rgba(255,255,255,.55)" stroke="#4f5f4f" stroke-width=".75"/><path d="M3.400 5.800l1.300-3.600 1.300 3.600M3.900 4.700h1.600" fill="none" stroke="#2a7dc8" stroke-width=".7"/></svg></div>
<div class="c" style="left:703.85px;width:76.25px"></div>
<div class="c" style="left:780.10px;width:76.25px"></div>
<div class="c" style="left:856.35px;width:76.25px;letter-spacing:-0.174px">0x149a5a6</div>
<div class="c" style="left:932.60px;width:94.40px"></div>
</div>
<div class="row m" style="top:417.250px">
<div class="c f" style="left:0.00px;width:77.60px;letter-spacing:-0.261px">Login Failed</div>
<div class="c" style="left:77.60px;width:92.50px;letter-spacing:-0.007px">10/09/2020 14:27:57</div>
<div class="c" style="left:170.10px;width:76.25px;letter-spacing:-0.293px">4625</div>
<div class="c" style="left:246.35px;width:76.25px;letter-spacing:-0.113px">FailureAudit</div>
<div class="c" style="left:322.60px;width:76.25px;letter-spacing:-0.113px">FailureAudit</div>
<div class="c" style="left:398.85px;width:76.25px;letter-spacing:-0.089px">Microsoft-Windows-S...</div>
<div class="c" style="left:475.10px;width:76.25px;letter-spacing:-0.655px">DESKTOP-1UVG2HR</div>
<div class="c" style="left:551.35px;width:76.25px;letter-spacing:-0.138px">tigeradmin</div>
<div class="c" style="left:627.60px;width:76.25px"><svg style="left:32.900px;top:3.300px" width="10" height="7.200" viewBox="0 0 9.4 7.8" preserveAspectRatio="none"><path d="M.4.400h6.600l2 2v5H.4z" fill="rgba(255,120,255,.25)" stroke="#c44ad6" stroke-width=".75"/><path d="M3.400 5.800l1.300-3.600 1.300 3.600M3.900 4.700h1.600" fill="none" stroke="#7a5ce0" stroke-width=".75"/></svg></div>
<div class="c" style="left:703.85px;width:76.25px"></div>
<div class="c" style="left:780.10px;width:76.25px"></div>
<div class="c" style="left:856.35px;width:76.25px;letter-spacing:-0.195px">0x0</div>
<div class="c" style="left:932.60px;width:94.40px"></div>
</div>
<div class="row y" style="top:430.375px">
<div class="c f" style="left:0.00px;width:77.60px;letter-spacing:-0.315px">Sicurezza</div>
<div class="c" style="left:77.60px;width:92.50px;letter-spacing:-0.007px">10/09/2020 14:27:57</div>
<div class="c" style="left:170.10px;width:76.25px;letter-spacing:-0.293px">4648</div>
<div class="c" style="left:246.35px;width:76.25px;letter-spacing:-0.284px">SuccessAudit</div>
<div class="c" style="left:322.60px;width:76.25px;letter-spacing:-0.284px">SuccessAudit</div>
<div class="c" style="left:398.85px;width:76.25px;letter-spacing:0.034px">127.0.0.1</div>
<div class="c" style="left:475.10px;width:76.25px;letter-spacing:-0.655px">DESKTOP-1UVG2HR</div>
<div class="c" style="left:551.35px;width:76.25px;letter-spacing:-0.138px">tigeradmin</div>
<div class="c" style="left:627.60px;width:76.25px"><svg style="left:32.900px;top:3.300px" width="10" height="7.200" viewBox="0 0 9.4 7.8" preserveAspectRatio="none"><path d="M.4.400h6.600l2 2v5H.4z" fill="rgba(255,255,255,.55)" stroke="#4f5f4f" stroke-width=".75"/><path d="M3.400 5.800l1.300-3.600 1.300 3.600M3.900 4.700h1.600" fill="none" stroke="#2a7dc8" stroke-width=".7"/></svg></div>
<div class="c" style="left:703.85px;width:76.25px"></div>
<div class="c" style="left:780.10px;width:76.25px"></div>
<div class="c" style="left:856.35px;width:76.25px;letter-spacing:-0.174px">0x149a5a6</div>
<div class="c" style="left:932.60px;width:94.40px"></div>
</div>
<div class="row m" style="top:443.500px">
<div class="c f" style="left:0.00px;width:77.60px;letter-spacing:-0.261px">Login Failed</div>
<div class="c" style="left:77.60px;width:92.50px;letter-spacing:-0.007px">10/09/2020 14:27:55</div>
<div class="c" style="left:170.10px;width:76.25px;letter-spacing:-0.293px">4625</div>
<div class="c" style="left:246.35px;width:76.25px;letter-spacing:-0.113px">FailureAudit</div>
<div class="c" style="left:322.60px;width:76.25px;letter-spacing:-0.113px">FailureAudit</div>
<div class="c" style="left:398.85px;width:76.25px;letter-spacing:-0.089px">Microsoft-Windows-S...</div>
<div class="c" style="left:475.10px;width:76.25px;letter-spacing:-0.655px">DESKTOP-1UVG2HR</div>
<div class="c" style="left:551.35px;width:76.25px;letter-spacing:0.124px">v.pettene</div>
<div class="c" style="left:627.60px;width:76.25px"><svg style="left:32.900px;top:3.300px" width="10" height="7.200" viewBox="0 0 9.4 7.8" preserveAspectRatio="none"><path d="M.4.400h6.600l2 2v5H.4z" fill="rgba(255,120,255,.25)" stroke="#c44ad6" stroke-width=".75"/><path d="M3.400 5.800l1.300-3.600 1.300 3.600M3.900 4.700h1.600" fill="none" stroke="#7a5ce0" stroke-width=".75"/></svg></div>
<div class="c" style="left:703.85px;width:76.25px"></div>
<div class="c" style="left:780.10px;width:76.25px"></div>
<div class="c" style="left:856.35px;width:76.25px;letter-spacing:-0.195px">0x0</div>
<div class="c" style="left:932.60px;width:94.40px"></div>
</div>
<div class="row m" style="top:456.625px">
<div class="c f" style="left:0.00px;width:77.60px;letter-spacing:-0.261px">Login Failed</div>
<div class="c" style="left:77.60px;width:92.50px;letter-spacing:-0.007px">10/09/2020 14:27:52</div>
<div class="c" style="left:170.10px;width:76.25px;letter-spacing:-0.293px">4625</div>
<div class="c" style="left:246.35px;width:76.25px;letter-spacing:-0.113px">FailureAudit</div>
<div class="c" style="left:322.60px;width:76.25px;letter-spacing:-0.113px">FailureAudit</div>
<div class="c" style="left:398.85px;width:76.25px;letter-spacing:-0.089px">Microsoft-Windows-S...</div>
<div class="c" style="left:475.10px;width:76.25px;letter-spacing:-0.655px">DESKTOP-1UVG2HR</div>
<div class="c" style="left:551.35px;width:76.25px;letter-spacing:0.124px">v.pettene</div>
<div class="c" style="left:627.60px;width:76.25px"><svg style="left:32.900px;top:3.300px" width="10" height="7.200" viewBox="0 0 9.4 7.8" preserveAspectRatio="none"><path d="M.4.400h6.600l2 2v5H.4z" fill="rgba(255,120,255,.25)" stroke="#c44ad6" stroke-width=".75"/><path d="M3.400 5.800l1.300-3.600 1.300 3.600M3.900 4.700h1.600" fill="none" stroke="#7a5ce0" stroke-width=".75"/></svg></div>
<div class="c" style="left:703.85px;width:76.25px"></div>
<div class="c" style="left:780.10px;width:76.25px"></div>
<div class="c" style="left:856.35px;width:76.25px;letter-spacing:-0.195px">0x0</div>
<div class="c" style="left:932.60px;width:94.40px"></div>
</div>
<div class="a" style="left:13.600px;top:49.10px;width:1027.400px;height:13.500px;border:1px solid #96964c"></div>
<svg style="left:5.8px;top:53.50px" width="3" height="5" viewBox="0 0 3 5"><path d="M0 0l3 2.500L0 5z" fill="#555"/></svg>
<div class="a" style="left:1041.5px;top:35.7px;width:11.500px;height:427.6px;background:#f0f0f0;border-left:1px solid #dcdcdc">
<div class="a" style="left:0px;top:0;width:10px;height:10.500px;background:#fdfdfd;border:1px solid #dadada"></div>
<svg style="left:3px;top:4px" width="4" height="2.500" viewBox="0 0 4 2.500"><path d="M0 2.500h4L2 0z" fill="#666"/></svg>
<div class="a" style="left:0px;top:11px;width:10px;height:34px;background:#fdfdfd;border:1px solid #dadada"></div>
<div class="a" style="left:0px;top:417.5px;width:10px;height:10.500px;background:#fdfdfd;border:1px solid #dadada"></div>
<svg style="left:3px;top:421.5px" width="4" height="2.500" viewBox="0 0 4 2.500"><path d="M0 0h4L2 2.500z" fill="#666"/></svg>
</div>
<div class="a" style="left:0;top:463.2px;width:1053px;height:23.5px;background:#f0f0f0;border-top:1px solid #d8d8d8">
<svg style="left:9.5px;top:8.2px" width="4.400" height="4.400" viewBox="0 0 4.400 4.400"><path d="M.3.300l3.800 3.800M4.100.300L.3 4.100" stroke="#666" stroke-width=".8"/></svg>
<svg style="left:19.7px;top:5.5px" width="9" height="9" viewBox="0 0 9 9"><rect x=".5" y=".5" width="8" height="8" fill="#fff" stroke="#b8b8b8"/><path d="M2.2 4.600l1.700 1.800 3-3.400" fill="none" stroke="#555" stroke-width="1"/></svg>
<div class="t" style="left:30.20px;top:7.10px;font-size:7px;letter-spacing:-0.362px;color:#4a4a4a">[PC] = 'DESKTOP-1UVG2HR'</div>
<svg style="left:121px;top:9.9px" width="3.600" height="2.200" viewBox="0 0 4 2.500"><path d="M0 0h4L2 2.500z" fill="#777"/></svg>
<div class="t" style="left:1001.00px;top:7.70px;font-size:7px;letter-spacing:-0.138px;color:#4a4a4a">Modifica Filtro</div>
</div>
</div>
<div class="a" style="left:139px;top:148.8px;width:1060px;height:1px;background:#f7f8fb"></div>
<div class="a" style="left:1198.700px;top:122.5px;width:1px;height:513px;background:#cfcfcf"></div>
<div class="a" style="left:.5px;top:148.800px;width:1px;height:487px;background:#d2d2d2"></div>
<div id="pop" class="a"><div class="a" style="left:0;top:.7px;width:157px;height:170px">
<div class="t" style="left:5.30px;top:6.20px;font-size:7px;letter-spacing:-0.196px;color:#4a4a4a">Valori</div>
<div class="t" style="left:31.00px;top:5.50px;font-size:7px;letter-spacing:-0.049px;color:#333">Filtri di data</div>
<svg style="left:0;top:18px" width="157" height="5.500" viewBox="0 0 157 5.500"><path d="M0 5h45.500l4-4 4 4H157" fill="none" stroke="#dadada" stroke-width="1"/></svg>
<div class="a" style="left:6.600px;top:31.500px;width:144px;height:12.3px;background:#fff;border:1px solid #dcdcdc"></div>
<div class="t" style="left:8.60px;top:34.40px;font-size:7px;letter-spacing:-0.137px;color:#3a3a3a">Periodi di data specifica</div>
<svg style="left:143.600px;top:36.600px" width="3.600" height="2.200" viewBox="0 0 4 2.500"><path d="M0 0h4L2 2.500z" fill="#777"/></svg>
<div class="a" style="left:6.600px;top:46px;width:144px;height:96px;background:#fff;border:1px solid #c4c4c4;overflow:hidden">
<div class="li" style="top:0.000px;background:#cce4f7;outline:1px solid #7a8a9a;outline-offset:-1px"><i></i><b style="letter-spacing:0.219px">Ieri</b></div>
<div class="li" style="top:11.875px"><i></i><b style="letter-spacing:-0.247px">Oggi</b></div>
<div class="li" style="top:23.750px"><i></i><b style="letter-spacing:-0.303px">Domani</b></div>
<div class="li" style="top:35.625px"><i></i><b style="letter-spacing:-0.192px">Settimana scorsa</b></div>
<div class="li" style="top:47.500px"><i></i><b style="letter-spacing:-0.116px">Questa settimana</b></div>
<div class="li" style="top:59.375px"><i></i><b style="letter-spacing:-0.196px">La prossima settimana</b></div>
<div class="li" style="top:71.250px"><i></i><b style="letter-spacing:-0.244px">Mese scorso</b></div>
<div class="li" style="top:83.125px"><i></i><b style="letter-spacing:-0.285px">Questo mese</b></div>
<div class="a" style="left:131.500px;top:0;width:11px;height:94px;background:#f0f0f0;border-left:1px solid #e0e0e0">
<div class="a" style="left:.5px;top:.5px;width:9.500px;height:10px;background:#fdfdfd;border:1px solid #dadada"></div>
<svg style="left:3.300px;top:4.200px" width="4" height="2.500" viewBox="0 0 4 2.500"><path d="M0 2.500h4L2 0z" fill="#666"/></svg>
<div class="a" style="left:.5px;top:11px;width:9.500px;height:43px;background:#fdfdfd;border:1px solid #dadada"></div>
<div class="a" style="left:.5px;top:83.500px;width:9.500px;height:10px;background:#fdfdfd;border:1px solid #dadada"></div>
<svg style="left:3.300px;top:87.500px" width="4" height="2.500" viewBox="0 0 4 2.500"><path d="M0 0h4L2 2.500z" fill="#666"/></svg>
</div>
</div>
<div class="a" style="left:0;top:144.300px;width:157px;height:1px;background:#dedede"></div>
<div class="a" style="left:6.600px;top:152.600px;width:46.500px;height:12.800px;border:1px solid #dcdcdc;background:#f4f4f4"></div>
<div class="t" style="left:12.00px;top:155.70px;font-size:7px;letter-spacing:-0.231px;color:#a4a4a4">Pulisci Filtro</div>
<div class="a" style="left:120px;top:152.600px;width:32.300px;height:12.800px;border:1px solid #c8c8c8;background:#fdfdfd"></div>
<div class="t" style="left:126.30px;top:155.70px;font-size:7px;letter-spacing:-0.224px;color:#333">Chiudi</div>
<svg style="left:150.500px;top:166.500px" width="5.500" height="5.500" viewBox="0 0 5.500 5.500"><g fill="#b0b0b0"><rect x="4" y="0" width="1" height="1"/><rect x="2" y="2" width="1" height="1"/><rect x="4" y="2" width="1" height="1"/><rect x="0" y="4" width="1" height="1"/><rect x="2" y="4" width="1" height="1"/><rect x="4" y="4" width="1" height="1"/></g></svg>
</div></div>
<div id="status" class="a">
<svg style="left:5.800px;top:2.500px" width="9.500" height="11" viewBox="0 0 9.500 11"><path d="M.5 0v9.500" stroke="#4f4f4f" stroke-width=".95" fill="none"/><path d="M.5 9.300h6.500" stroke="#c7b3ad" stroke-width=".8" fill="none"/><path d="M2 2.500h4v3.300H2z" fill="#86b6e2"/><path d="M5.300 1.800l2.800-1v2.300z" fill="#4a8fd4"/></svg>
<div class="t" style="left:17.60px;top:4.20px;font-size:7px;letter-spacing:0.001px;color:#555">Version : 2.20.1.10</div>
<svg style="left:86.500px;top:2px" width="10" height="10" viewBox="0 0 10 10"><circle cx="5" cy="5" r="4.400" fill="#fff" stroke="#3a84d0" stroke-width=".9"/><path d="M2.600 5.200l4.600-2.400-2 4.800-.6-2z" fill="#3a84d0"/></svg>
<div class="t" style="left:98.60px;top:4.20px;font-size:7px;letter-spacing:-0.359px;color:#555">License : ENTERPRISE 250</div>
<svg style="left:188.300px;top:2px" width="10.500" height="11" viewBox="0 0 10.500 11"><rect x=".5" y="1.500" width="8.300" height="8" fill="#fff" stroke="#777" stroke-width=".8"/><rect x=".1" y="1" width="9.100" height="2.300" fill="#e04a3a"/><rect x="2" y=".2" width="1" height="1.600" fill="#e04a3a"/><rect x="6.200" y=".2" width="1" height="1.600" fill="#e04a3a"/><g fill="#b0b0b0"><rect x="2" y="4.800" width="4.500" height=".8"/><rect x="2" y="6.600" width="3" height=".8"/></g><rect x="5.800" y="6.600" width="4.400" height="4" fill="#f59b3c"/></svg>
<div class="t" style="left:201.60px;top:4.20px;font-size:7px;letter-spacing:-0.027px;color:#555">Expiration: 30/10/2020 23:00:00</div>
<svg style="left:312.300px;top:2.700px" width="6.400" height="9.400" viewBox="0 0 7.5 10" preserveAspectRatio="none"><path d="M0 1.600C0 .6 1.700 0 3.750 0S7.500.6 7.500 1.600v6.800c0 1-1.700 1.600-3.750 1.600S0 9.400 0 8.400z" fill="#f59b3c"/><path d="M0 3.600c1 .9 6.500.9 7.500 0M0 6.200c1 .9 6.500.9 7.500 0" fill="none" stroke="#f0f0f0" stroke-width=".7"/></svg>
<div class="t" style="left:323.20px;top:4.20px;font-size:7px;letter-spacing:-0.021px;color:#555">DB (1.1.1.2): 0,38 Mb.</div>
<div class="t" style="left:399.50px;top:4.20px;font-size:7px;letter-spacing:-0.268px;color:#555">Occupation DB</div>
<div class="a" style="left:446.800px;top:2.300px;width:125px;height:10.400px;background:#e4e4e4"></div>
<svg style="left:580px;top:2.300px" width="8.500" height="10" viewBox="0 0 8.5 10"><ellipse cx="4.250" cy="2.600" rx="2.200" ry="2.600" fill="#4a4a4a"/><path d="M0 10c0-3 1.600-4.200 4.250-4.200S8.500 7 8.500 10z" fill="#4a4a4a"/></svg>
<div class="t" style="left:591.60px;top:4.20px;font-size:7px;letter-spacing:-0.157px;color:#555">User : admin</div>
<svg style="left:1100.500px;top:2px" width="10.500" height="11" viewBox="0 0 10.500 11"><circle cx="4.600" cy="5.200" r="3.700" fill="none" stroke="#2a78c8" stroke-width="1.700"/><circle cx="7.600" cy="3.200" r="1.700" fill="#e8503a"/><circle cx="7.800" cy="7.800" r="1.900" fill="#f0f0f0" stroke="#2a78c8" stroke-width=".8"/></svg>
<div class="t" style="left:1113.20px;top:4.20px;font-size:7px;letter-spacing:-0.454px;color:#555">Skin</div>
<svg style="left:1127.500px;top:6.300px" width="4" height="2.600" viewBox="0 0 4 2.600"><path d="M.3.300L2 2l1.700-1.700" fill="none" stroke="#666" stroke-width=".7"/></svg>
<div class="a" style="left:1142px;top:4.800px;width:4.200px;height:5.200px;background:#3aa45c"></div><div class="a" style="left:1146.200px;top:4.800px;width:3.200px;height:5.200px;background:#f4f4f4"></div><div class="a" style="left:1149.400px;top:4.800px;width:3.700px;height:5.200px;background:#c9473f"></div>
<div class="t" style="left:1155.40px;top:4.20px;font-size:7px;letter-spacing:-0.084px;color:#555">Made in Italy</div>
<div class="a" style="left:0;top:14.2px;width:1200px;height:.8px;background:#b4b4b4"></div>
<div class="a" style="left:245px;top:14.2px;width:955px;height:.8px;background:#4a4a4a"></div>
<div class="a" style="left:0;top:14.2px;width:30px;height:.8px;background:#333"></div>
</div>
</body></html>
